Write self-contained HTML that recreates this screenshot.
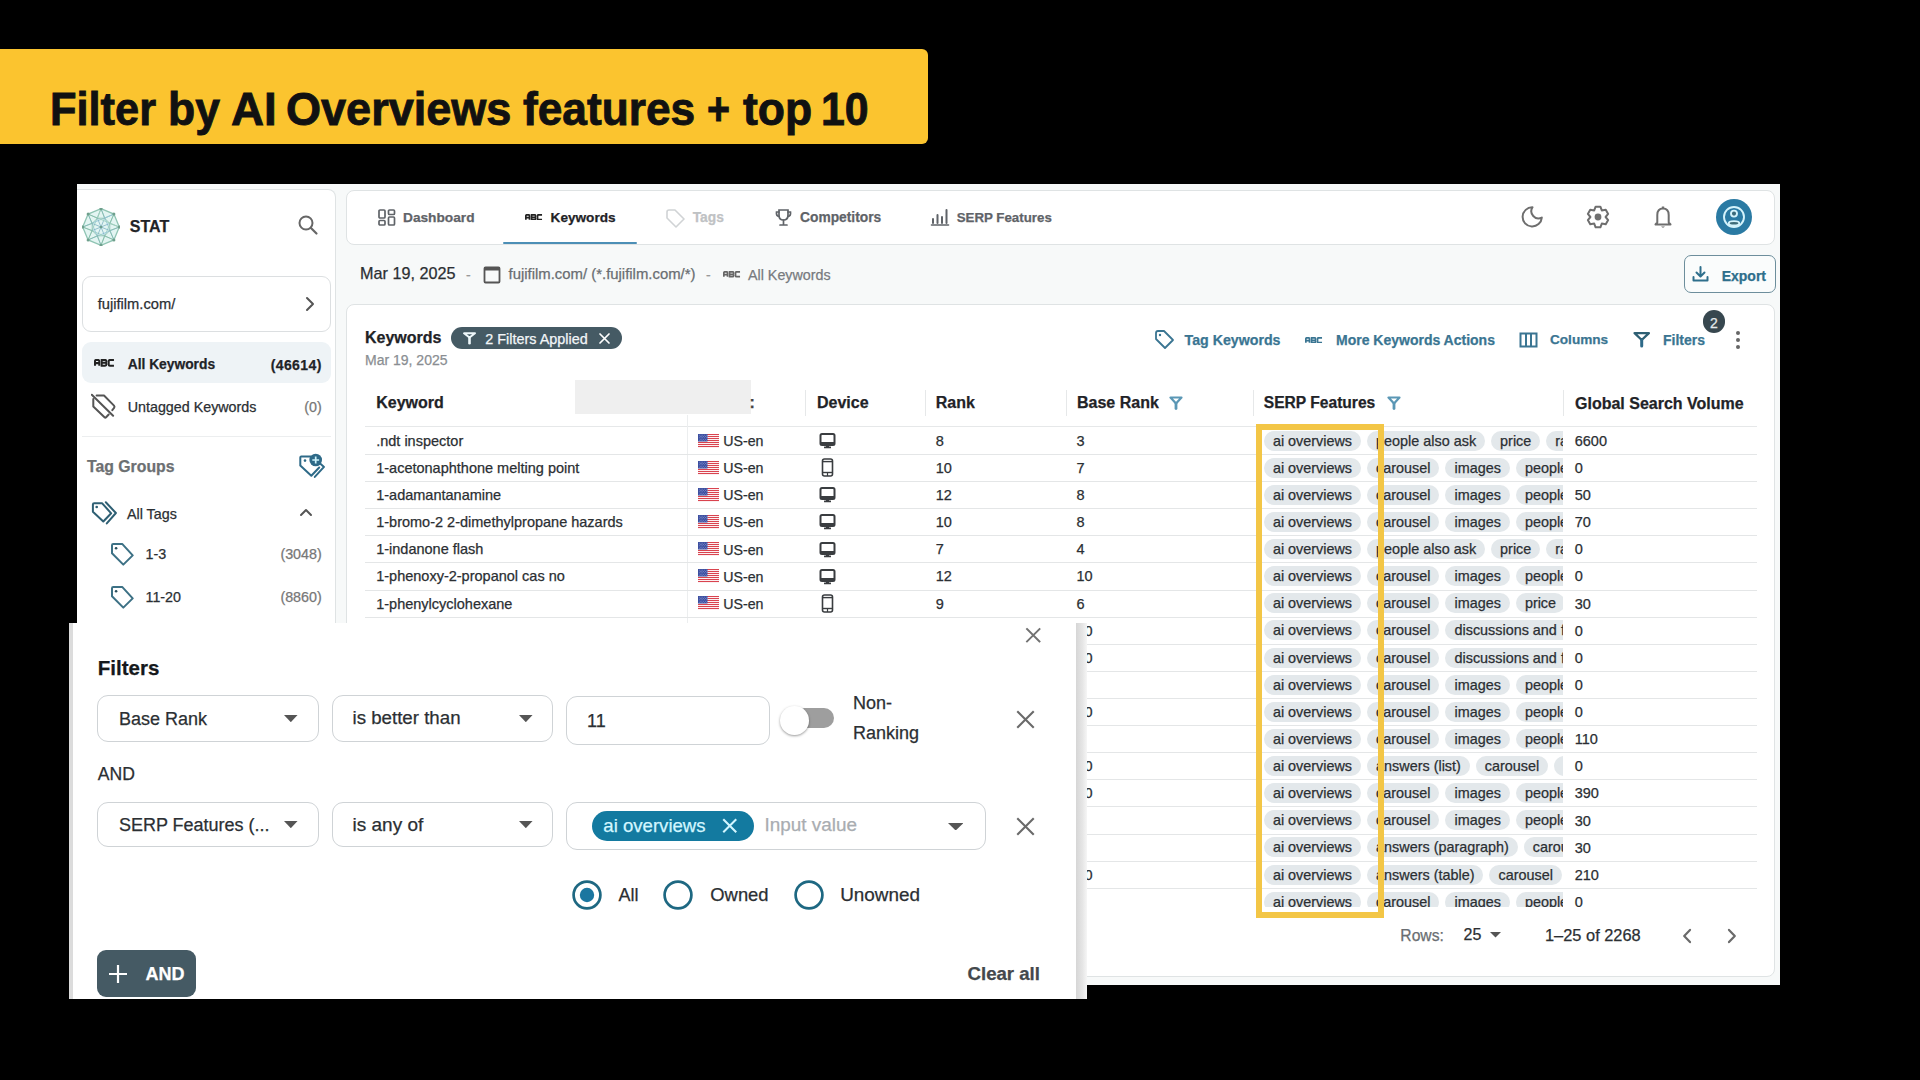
<!DOCTYPE html>
<html><head><meta charset="utf-8"><title>Filter by AI Overviews features</title>
<style>
html,body{margin:0;padding:0;}
body{width:1920px;height:1080px;background:#000;position:relative;overflow:hidden;font-family:"Liberation Sans", sans-serif;}
.t{position:absolute;white-space:nowrap;-webkit-text-stroke:0.25px currentColor;}
.r{position:absolute;}
.chips{position:absolute;width:299px;height:20px;overflow:hidden;display:flex;gap:6px;white-space:nowrap;}
.chip{-webkit-text-stroke:0.25px currentColor;flex:none;display:inline-block;height:20px;line-height:20px;padding:0 9px;border-radius:10px;background:#e3e8eb;color:#2b2f33;font-size:14.4px;}
</style></head><body>
<div class="r" style="left:0.00px;top:49.00px;width:928.00px;height:95.00px;background:#FBC42F;border-radius:0 6px 6px 0;"></div>
<div class="t" style="left:50.49px;top:84.81px;font-size:47px;line-height:47px;font-weight:700;color:#111;transform:scaleX(0.9227);transform-origin:0 0;-webkit-text-stroke:0.9px #111;">Filter</div>
<div class="t" style="left:167.82px;top:84.81px;font-size:47px;line-height:47px;font-weight:700;color:#111;transform:scaleX(0.9461);transform-origin:0 0;-webkit-text-stroke:0.9px #111;">by</div>
<div class="t" style="left:230.75px;top:84.81px;font-size:47px;line-height:47px;font-weight:700;color:#111;transform:scaleX(0.9725);transform-origin:0 0;-webkit-text-stroke:0.9px #111;">AI</div>
<div class="t" style="left:286.12px;top:84.81px;font-size:47px;line-height:47px;font-weight:700;color:#111;transform:scaleX(0.9585);transform-origin:0 0;-webkit-text-stroke:0.9px #111;">Overviews</div>
<div class="t" style="left:522.83px;top:84.81px;font-size:47px;line-height:47px;font-weight:700;color:#111;transform:scaleX(0.9411);transform-origin:0 0;-webkit-text-stroke:0.9px #111;">features</div>
<div class="t" style="left:706.96px;top:84.81px;font-size:47px;line-height:47px;font-weight:700;color:#111;transform:scaleX(0.8383);transform-origin:0 0;-webkit-text-stroke:0.9px #111;">+</div>
<div class="t" style="left:742.67px;top:84.81px;font-size:47px;line-height:47px;font-weight:700;color:#111;transform:scaleX(0.9461);transform-origin:0 0;-webkit-text-stroke:0.9px #111;">top</div>
<div class="t" style="left:820.82px;top:84.81px;font-size:47px;line-height:47px;font-weight:700;color:#111;transform:scaleX(0.9108);transform-origin:0 0;-webkit-text-stroke:0.9px #111;">10</div>
<div class="r" style="left:77.00px;top:184.00px;width:1703.00px;height:801.00px;background:#f7f9f9;"></div>
<div class="r" style="left:77.00px;top:189.00px;width:259.00px;height:796.00px;background:#fff;border:1px solid #dfe3e4;border-left:none;border-radius:0 8px 8px 0;box-sizing:border-box;"></div>
<svg class="r" style="left:82.00px;top:207.50px" width="38" height="38" viewBox="0 0 38 38"><polygon points="19.0,0.7 31.9,6.1 37.3,19.0 31.9,31.9 19.0,37.3 6.1,31.9 0.7,19.0 6.1,6.1" fill="#e3f5f2" stroke="#8fc4b3" stroke-width="1.3"/><line x1="19.0" y1="0.7" x2="31.9" y2="31.9" stroke="#95c6dc" stroke-width="0.9"/><line x1="19.0" y1="0.7" x2="22.6" y2="10.2" stroke="#86bba8" stroke-width="0.9"/><line x1="19.0" y1="0.7" x2="15.4" y2="10.2" stroke="#86bba8" stroke-width="0.9"/><line x1="22.6" y1="10.2" x2="19.0" y2="19.0" stroke="#7fb2c4" stroke-width="0.8"/><line x1="22.6" y1="10.2" x2="27.8" y2="15.4" stroke="#8cc0b0" stroke-width="0.8"/><line x1="31.9" y1="6.1" x2="19.0" y2="37.3" stroke="#9fd0c0" stroke-width="0.9"/><line x1="31.9" y1="6.1" x2="27.8" y2="15.4" stroke="#86bba8" stroke-width="0.9"/><line x1="31.9" y1="6.1" x2="22.6" y2="10.2" stroke="#86bba8" stroke-width="0.9"/><line x1="27.8" y1="15.4" x2="19.0" y2="19.0" stroke="#7fb2c4" stroke-width="0.8"/><line x1="27.8" y1="15.4" x2="27.8" y2="22.6" stroke="#8cc0b0" stroke-width="0.8"/><line x1="37.3" y1="19.0" x2="6.1" y2="31.9" stroke="#95c6dc" stroke-width="0.9"/><line x1="37.3" y1="19.0" x2="27.8" y2="22.6" stroke="#86bba8" stroke-width="0.9"/><line x1="37.3" y1="19.0" x2="27.8" y2="15.4" stroke="#86bba8" stroke-width="0.9"/><line x1="27.8" y1="22.6" x2="19.0" y2="19.0" stroke="#7fb2c4" stroke-width="0.8"/><line x1="27.8" y1="22.6" x2="22.6" y2="27.8" stroke="#8cc0b0" stroke-width="0.8"/><line x1="31.9" y1="31.9" x2="0.7" y2="19.0" stroke="#9fd0c0" stroke-width="0.9"/><line x1="31.9" y1="31.9" x2="22.6" y2="27.8" stroke="#86bba8" stroke-width="0.9"/><line x1="31.9" y1="31.9" x2="27.8" y2="22.6" stroke="#86bba8" stroke-width="0.9"/><line x1="22.6" y1="27.8" x2="19.0" y2="19.0" stroke="#7fb2c4" stroke-width="0.8"/><line x1="22.6" y1="27.8" x2="15.4" y2="27.8" stroke="#8cc0b0" stroke-width="0.8"/><line x1="19.0" y1="37.3" x2="6.1" y2="6.1" stroke="#95c6dc" stroke-width="0.9"/><line x1="19.0" y1="37.3" x2="15.4" y2="27.8" stroke="#86bba8" stroke-width="0.9"/><line x1="19.0" y1="37.3" x2="22.6" y2="27.8" stroke="#86bba8" stroke-width="0.9"/><line x1="15.4" y1="27.8" x2="19.0" y2="19.0" stroke="#7fb2c4" stroke-width="0.8"/><line x1="15.4" y1="27.8" x2="10.2" y2="22.6" stroke="#8cc0b0" stroke-width="0.8"/><line x1="6.1" y1="31.9" x2="19.0" y2="0.7" stroke="#9fd0c0" stroke-width="0.9"/><line x1="6.1" y1="31.9" x2="10.2" y2="22.6" stroke="#86bba8" stroke-width="0.9"/><line x1="6.1" y1="31.9" x2="15.4" y2="27.8" stroke="#86bba8" stroke-width="0.9"/><line x1="10.2" y1="22.6" x2="19.0" y2="19.0" stroke="#7fb2c4" stroke-width="0.8"/><line x1="10.2" y1="22.6" x2="10.2" y2="15.4" stroke="#8cc0b0" stroke-width="0.8"/><line x1="0.7" y1="19.0" x2="31.9" y2="6.1" stroke="#95c6dc" stroke-width="0.9"/><line x1="0.7" y1="19.0" x2="10.2" y2="15.4" stroke="#86bba8" stroke-width="0.9"/><line x1="0.7" y1="19.0" x2="10.2" y2="22.6" stroke="#86bba8" stroke-width="0.9"/><line x1="10.2" y1="15.4" x2="19.0" y2="19.0" stroke="#7fb2c4" stroke-width="0.8"/><line x1="10.2" y1="15.4" x2="15.4" y2="10.2" stroke="#8cc0b0" stroke-width="0.8"/><line x1="6.1" y1="6.1" x2="37.3" y2="19.0" stroke="#9fd0c0" stroke-width="0.9"/><line x1="6.1" y1="6.1" x2="15.4" y2="10.2" stroke="#86bba8" stroke-width="0.9"/><line x1="6.1" y1="6.1" x2="10.2" y2="15.4" stroke="#86bba8" stroke-width="0.9"/><line x1="15.4" y1="10.2" x2="19.0" y2="19.0" stroke="#7fb2c4" stroke-width="0.8"/><line x1="15.4" y1="10.2" x2="22.6" y2="10.2" stroke="#8cc0b0" stroke-width="0.8"/><circle cx="19.0" cy="0.7" r="1.5" fill="#6f9f8c"/><circle cx="31.9" cy="6.1" r="1.5" fill="#6f9f8c"/><circle cx="37.3" cy="19.0" r="1.5" fill="#6f9f8c"/><circle cx="31.9" cy="31.9" r="1.5" fill="#6f9f8c"/><circle cx="19.0" cy="37.3" r="1.5" fill="#6f9f8c"/><circle cx="6.1" cy="31.9" r="1.5" fill="#6f9f8c"/><circle cx="0.7" cy="19.0" r="1.5" fill="#6f9f8c"/><circle cx="6.1" cy="6.1" r="1.5" fill="#6f9f8c"/><circle cx="19.0" cy="19.0" r="1.3" fill="#6f9f8c"/></svg>
<div class="t" style="left:129.80px;top:219.06px;font-size:16px;line-height:16px;font-weight:700;color:#1f2327;">STAT</div>
<svg class="r" style="left:297.00px;top:214.00px" width="22" height="22" viewBox="0 0 22 22"><circle cx="9" cy="9" r="6.5" fill="none" stroke="#666" stroke-width="2"/><line x1="14" y1="14" x2="19.5" y2="19.5" stroke="#666" stroke-width="2.2" stroke-linecap="round"/></svg>
<div class="r" style="left:81.80px;top:275.80px;width:248.80px;height:56.20px;border:1px solid #dcdfe1;border-radius:9px;box-sizing:border-box;background:#fff;"></div>
<div class="t" style="left:97.70px;top:296.76px;font-size:14.7px;line-height:14.7px;font-weight:400;color:#2b2f33;">fujifilm.com/</div>
<svg class="r" style="left:303.00px;top:296.00px" width="14" height="16" viewBox="0 0 14 16"><polyline points="4,2 10,8 4,14" fill="none" stroke="#555" stroke-width="2" stroke-linecap="round" stroke-linejoin="round"/></svg>
<div class="r" style="left:81.70px;top:342.00px;width:249.80px;height:41.00px;background:#eef3f6;border-radius:9px;"></div>
<svg class="r" style="left:93.50px;top:359.00px" width="21.12" height="7.68" viewBox="0 0 22 8"><g fill="none" stroke="#222" stroke-width="2.1" stroke-linejoin="miter"><path d="M1 7 V2.3 Q1 1 2.3 1 H4.2 Q5.5 1 5.5 2.3 V7 M1 4.3 H5.5"/><path d="M8 1 H11.6 Q12.9 1 12.9 2.2 V3.2 Q12.9 4 12 4 Q12.9 4 12.9 4.9 V5.8 Q12.9 7 11.6 7 H8 Z M8 4 H12"/><path d="M20.8 1 H16.6 Q15.3 1 15.3 2.3 V5.7 Q15.3 7 16.6 7 H20.8"/></g></svg>
<div class="t" style="left:127.70px;top:357.72px;font-size:13.8px;line-height:13.8px;font-weight:700;color:#1f2327;">All Keywords</div>
<div class="t" style="right:1598.30px;top:357.55px;font-size:14px;line-height:14px;font-weight:700;color:#1f2327;letter-spacing:0.4px;">(46614)</div>
<svg class="r" style="left:91.00px;top:393.00px" width="26" height="27" viewBox="0 0 26 27"><g fill="none" stroke="#555" stroke-width="2" stroke-linejoin="round" stroke-linecap="round"><path d="M5.6 2.5 H13 L23 12.6 Q24 13.8 23 15 L21.3 17.2"/><path d="M2.3 5.9 V13.6 L13.5 24.2 Q14.3 25 15.1 24.2 L17.7 21.5"/><path d="M0.8 1.8 L22.1 22.8"/></g></svg>
<div class="t" style="left:127.70px;top:399.60px;font-size:14.3px;line-height:14.3px;font-weight:400;color:#2b2f33;">Untagged Keywords</div>
<div class="t" style="right:1598.30px;top:399.60px;font-size:14.3px;line-height:14.3px;font-weight:400;color:#777;">(0)</div>
<div class="r" style="left:82.00px;top:436.00px;width:249.00px;height:1.00px;background:#eceeef;"></div>
<div class="t" style="left:87.00px;top:458.53px;font-size:15.8px;line-height:15.8px;font-weight:700;color:#6c6f72;">Tag Groups</div>
<svg class="r" style="left:298.00px;top:451.00px" width="28" height="28" viewBox="0 0 28 28"><g fill="none" stroke="#2e6a88" stroke-width="2" stroke-linejoin="round" stroke-linecap="round"><path d="M12.4 5.5 H3.3 Q2.3 5.5 2.3 6.5 V14.6 L13.3 24.7 L21.2 16.5"/><path d="M22.7 13 L26 15.9 L16.8 25.9"/></g><circle cx="7" cy="9.6" r="1.3" fill="#2e6a88"/><circle cx="17.7" cy="9" r="6.3" fill="#2e6a88"/><path d="M17.7 5.6 V12.4 M14.3 9 H21.1" stroke="#cdf3fb" stroke-width="1.7"/></svg>
<svg class="r" style="left:90.00px;top:500.00px" width="28" height="26" viewBox="0 0 28 26"><g fill="none" stroke="#2e5f73" stroke-width="2" stroke-linejoin="round" stroke-linecap="round"><path d="M4.2 3.2 H12 L21.2 13.3 L13.3 21.5 L2.9 11.7 V4.5 Q2.9 3.2 4.2 3.2 Z"/><path d="M15.8 2.3 L25.9 13 L16.8 23.4"/></g><circle cx="6.7" cy="7" r="1.3" fill="#2e5f73"/></svg>
<div class="t" style="left:127.00px;top:506.80px;font-size:14.3px;line-height:14.3px;font-weight:400;color:#2b2f33;">All Tags</div>
<svg class="r" style="left:299.00px;top:507.00px" width="14" height="10" viewBox="0 0 14 10"><polyline points="2,8 7,3 12,8" fill="none" stroke="#555" stroke-width="2" stroke-linecap="round" stroke-linejoin="round"/></svg>
<svg class="r" style="left:110.00px;top:541.50px" width="24" height="24" viewBox="0 0 24 24"><g fill="none" stroke="#3d7185" stroke-width="2" stroke-linejoin="round"><path d="M3.2 2.1 H12.4 L22.7 13.4 L13.3 22.6 L2 11.3 V3.3 Q2 2.1 3.2 2.1 Z"/></g><circle cx="6.1" cy="6.3" r="1.3" fill="#2a4f5c"/></svg>
<div class="t" style="left:145.50px;top:546.50px;font-size:14.3px;line-height:14.3px;font-weight:400;color:#2b2f33;">1-3</div>
<div class="t" style="right:1598.30px;top:546.50px;font-size:14.3px;line-height:14.3px;font-weight:400;color:#777;">(3048)</div>
<svg class="r" style="left:110.00px;top:584.50px" width="24" height="24" viewBox="0 0 24 24"><g fill="none" stroke="#3d7185" stroke-width="2" stroke-linejoin="round"><path d="M3.2 2.1 H12.4 L22.7 13.4 L13.3 22.6 L2 11.3 V3.3 Q2 2.1 3.2 2.1 Z"/></g><circle cx="6.1" cy="6.3" r="1.3" fill="#2a4f5c"/></svg>
<div class="t" style="left:145.50px;top:589.50px;font-size:14.3px;line-height:14.3px;font-weight:400;color:#2b2f33;">11-20</div>
<div class="t" style="right:1598.30px;top:589.50px;font-size:14.3px;line-height:14.3px;font-weight:400;color:#777;">(8860)</div>
<div class="r" style="left:346.00px;top:189.50px;width:1429.00px;height:55.00px;background:#fff;border:1px solid #dfe3e4;border-radius:8px;box-sizing:border-box;"></div>
<svg class="r" style="left:378.00px;top:208.50px" width="18" height="17" viewBox="0 0 18 17"><g fill="none" stroke="#5f6368" stroke-width="1.7"><rect x="1" y="1" width="6" height="8" rx="1"/><rect x="10.5" y="1" width="6" height="4.5" rx="1"/><rect x="1" y="11.5" width="6" height="4.5" rx="1"/><rect x="10.5" y="8" width="6" height="8" rx="1"/></g></svg>
<div class="t" style="left:403.00px;top:210.90px;font-size:13.7px;line-height:13.7px;font-weight:700;color:#5f6368;">Dashboard</div>
<svg class="r" style="left:524.50px;top:213.50px" width="18.04" height="6.56" viewBox="0 0 22 8"><g fill="none" stroke="#222" stroke-width="2.1" stroke-linejoin="miter"><path d="M1 7 V2.3 Q1 1 2.3 1 H4.2 Q5.5 1 5.5 2.3 V7 M1 4.3 H5.5"/><path d="M8 1 H11.6 Q12.9 1 12.9 2.2 V3.2 Q12.9 4 12 4 Q12.9 4 12.9 4.9 V5.8 Q12.9 7 11.6 7 H8 Z M8 4 H12"/><path d="M20.8 1 H16.6 Q15.3 1 15.3 2.3 V5.7 Q15.3 7 16.6 7 H20.8"/></g></svg>
<div class="t" style="left:550.60px;top:210.99px;font-size:13.6px;line-height:13.6px;font-weight:700;color:#1f2327;">Keywords</div>
<div class="r" style="left:502.70px;top:241.50px;width:133.90px;height:2.50px;background:#4c8fb6;border-radius:1px;"></div>
<svg class="r" style="left:665.00px;top:208.00px" width="20" height="20" viewBox="0 0 20 20"><g fill="none" stroke="#d0d3d5" stroke-width="1.6" stroke-linejoin="round"><path d="M2 4 Q2 2 4 2 L10 2 L19 11 L11 19 L2 10 Z"/></g></svg>
<div class="t" style="left:692.70px;top:210.82px;font-size:13.8px;line-height:13.8px;font-weight:700;color:#bfc2c4;">Tags</div>
<svg class="r" style="left:774.00px;top:208.00px" width="19" height="19" viewBox="0 0 19 19"><g fill="none" stroke="#5f6368" stroke-width="1.7" stroke-linecap="round"><path d="M5 2 H14 V7 Q14 12 9.5 12 Q5 12 5 7 Z"/><path d="M5 4 H2.5 Q2 8 5 8.5 M14 4 H16.5 Q17 8 14 8.5"/><path d="M9.5 12 V16 M6 17 H13"/></g></svg>
<div class="t" style="left:800.00px;top:210.82px;font-size:13.8px;line-height:13.8px;font-weight:700;color:#5f6368;">Competitors</div>
<svg class="r" style="left:930.00px;top:208.00px" width="20" height="18" viewBox="0 0 20 18"><g stroke="#5f6368" stroke-width="2" stroke-linecap="round"><line x1="3" y1="15" x2="3" y2="11"/><line x1="7.5" y1="15" x2="7.5" y2="7"/><line x1="12" y1="15" x2="12" y2="9"/><line x1="16.5" y1="15" x2="16.5" y2="2"/><line x1="1.5" y1="17" x2="18.5" y2="17" stroke-width="1.6"/></g></svg>
<div class="t" style="left:956.70px;top:211.24px;font-size:13.3px;line-height:13.3px;font-weight:700;color:#5f6368;">SERP Features</div>
<svg class="r" style="left:1520.00px;top:205.00px" width="24" height="24" viewBox="0 0 24 24"><path d="M12.5 2.3 A9.6 9.6 0 1 0 21.8 12.6 A7.2 7.2 0 0 1 12.5 2.3 Z" fill="none" stroke="#6e6e6e" stroke-width="2" stroke-linejoin="round"/></svg>
<svg class="r" style="left:1586.00px;top:205.00px" width="24" height="24" viewBox="0 0 24 24"><path fill="none" stroke="#6e6e6e" stroke-width="2" stroke-linejoin="round" d="M8.20 5.42 L9.62 1.67 L14.38 1.67 L15.80 5.42 L15.80 5.42 L19.75 4.77 L22.14 8.90 L19.60 12.00 L19.60 12.00 L22.14 15.10 L19.75 19.23 L15.80 18.58 L15.80 18.58 L14.38 22.33 L9.62 22.33 L8.20 18.58 L8.20 18.58 L4.25 19.23 L1.86 15.10 L4.40 12.00 L4.40 12.00 L1.86 8.90 L4.25 4.77 L8.20 5.42 Z"/><circle cx="12" cy="12" r="3.4" fill="#707070"/></svg>
<svg class="r" style="left:1653.00px;top:205.00px" width="20" height="24" viewBox="0 0 20 24"><g fill="none" stroke="#6e6e6e" stroke-width="2" stroke-linejoin="round"><path d="M10 3.5 Q4.3 3.5 4.3 10 V17.5 L2.5 19.5 H17.5 L15.7 17.5 V10 Q15.7 3.5 10 3.5 Z"/></g><path d="M8.8 1.5 H11.2 V3.5 H8.8 Z" fill="#6e6e6e"/><path d="M8 21.5 H12 Q10 23.8 8 21.5 Z" fill="#6e6e6e"/></svg>
<div class="r" style="left:1715.5px;top:199px;width:36px;height:36px;border-radius:50%;background:#2a7aa3;"></div>
<svg class="r" style="left:1721.50px;top:205.00px" width="24" height="24" viewBox="0 0 24 24"><circle cx="12" cy="12" r="10" fill="none" stroke="#d4f3fb" stroke-width="1.9"/><circle cx="12" cy="8.6" r="3" fill="#3b6a7a" stroke="#d4f3fb" stroke-width="1.9"/><ellipse cx="12" cy="18.3" rx="5.3" ry="2.2" fill="#3d6b78" stroke="#d4f3fb" stroke-width="1.9"/></svg>
<div class="t" style="left:360.00px;top:265.09px;font-size:16.2px;line-height:16.2px;font-weight:400;color:#2b2f33;">Mar 19, 2025</div>
<div class="t" style="left:466.00px;top:267.95px;font-size:14px;line-height:14px;font-weight:400;color:#999;">-</div>
<svg class="r" style="left:482.50px;top:265.50px" width="19" height="18" viewBox="0 0 19 18"><rect x="1.5" y="1.5" width="15" height="15" rx="1" fill="none" stroke="#555" stroke-width="1.8"/><rect x="1.5" y="1.5" width="15" height="3" fill="#555"/></svg>
<div class="t" style="left:508.50px;top:267.19px;font-size:14.9px;line-height:14.9px;font-weight:400;color:#6a6e72;">fujifilm.com/ (*.fujifilm.com/*)</div>
<div class="t" style="left:706.00px;top:267.95px;font-size:14px;line-height:14px;font-weight:400;color:#999;">-</div>
<svg class="r" style="left:723.00px;top:271.00px" width="18.04" height="6.56" viewBox="0 0 22 8"><g fill="none" stroke="#666" stroke-width="2.1" stroke-linejoin="miter"><path d="M1 7 V2.3 Q1 1 2.3 1 H4.2 Q5.5 1 5.5 2.3 V7 M1 4.3 H5.5"/><path d="M8 1 H11.6 Q12.9 1 12.9 2.2 V3.2 Q12.9 4 12 4 Q12.9 4 12.9 4.9 V5.8 Q12.9 7 11.6 7 H8 Z M8 4 H12"/><path d="M20.8 1 H16.6 Q15.3 1 15.3 2.3 V5.7 Q15.3 7 16.6 7 H20.8"/></g></svg>
<div class="t" style="left:748.00px;top:267.70px;font-size:14.3px;line-height:14.3px;font-weight:400;color:#777b7f;">All Keywords</div>
<div class="r" style="left:1684.00px;top:255.30px;width:91.60px;height:37.50px;border:1.3px solid #6d8e9c;border-radius:7px;box-sizing:border-box;background:#fafcfc;"></div>
<svg class="r" style="left:1692.00px;top:265.00px" width="17" height="18" viewBox="0 0 17 18"><g fill="none" stroke="#2e6f8c" stroke-width="2" stroke-linecap="round" stroke-linejoin="round"><path d="M8.5 2 V11 M4.5 7.5 L8.5 11.5 L12.5 7.5"/><path d="M1.5 12 V15.5 H15.5 V12"/></g></svg>
<div class="t" style="left:1721.70px;top:268.65px;font-size:14px;line-height:14px;font-weight:700;color:#2e6f8c;">Export</div>
<div class="r" style="left:346.00px;top:303.50px;width:1429.00px;height:673.50px;background:#fff;border:1px solid #dfe3e4;border-radius:8px;box-sizing:border-box;"></div>
<div class="t" style="left:365.00px;top:329.86px;font-size:16px;line-height:16px;font-weight:700;color:#1f2327;">Keywords</div>
<div class="r" style="left:451.00px;top:327.25px;width:171.20px;height:22.15px;background:#455a64;border-radius:11px;"></div>
<svg class="r" style="left:461.00px;top:330.00px" width="16" height="16" viewBox="0 0 16 16"><g fill="none" stroke="#eef7fa" stroke-width="2" stroke-linejoin="round" stroke-linecap="round"><path d="M3 3.3 H14 L8.5 7.5 Z"/><path d="M8.5 7.5 V13.3" stroke-width="2.6"/></g></svg>
<div class="t" style="left:485.30px;top:332.11px;font-size:14.4px;line-height:14.4px;font-weight:400;color:#f2f6f8;">2 Filters Applied</div>
<svg class="r" style="left:598.00px;top:332.00px" width="13" height="13" viewBox="0 0 13 13"><path d="M2 2 L11 11 M11 2 L2 11" stroke="#fff" stroke-width="1.7" stroke-linecap="round"/></svg>
<div class="t" style="left:365.00px;top:352.90px;font-size:14px;line-height:14px;font-weight:400;color:#8a8e92;">Mar 19, 2025</div>
<svg class="r" style="left:1154.00px;top:329.00px" width="21" height="21" viewBox="0 0 21 21"><g fill="none" stroke="#3a7592" stroke-width="1.8" stroke-linejoin="round"><path d="M2 4 Q2 2 4 2 L10 2 L19 11 L11 19 L2 10 Z"/></g><circle cx="6" cy="6" r="1.2" fill="#3a7592"/></svg>
<div class="t" style="left:1184.60px;top:332.98px;font-size:14.2px;line-height:14.2px;font-weight:700;color:#3a7592;">Tag Keywords</div>
<svg class="r" style="left:1305.00px;top:336.50px" width="18.04" height="6.56" viewBox="0 0 22 8"><g fill="none" stroke="#3a7592" stroke-width="2.1" stroke-linejoin="miter"><path d="M1 7 V2.3 Q1 1 2.3 1 H4.2 Q5.5 1 5.5 2.3 V7 M1 4.3 H5.5"/><path d="M8 1 H11.6 Q12.9 1 12.9 2.2 V3.2 Q12.9 4 12 4 Q12.9 4 12.9 4.9 V5.8 Q12.9 7 11.6 7 H8 Z M8 4 H12"/><path d="M20.8 1 H16.6 Q15.3 1 15.3 2.3 V5.7 Q15.3 7 16.6 7 H20.8"/></g></svg>
<div class="t" style="left:1336.00px;top:333.15px;font-size:14px;line-height:14px;font-weight:700;color:#3a7592;">More Keywords Actions</div>
<svg class="r" style="left:1519.00px;top:332.00px" width="19" height="16" viewBox="0 0 19 16"><g fill="none" stroke="#3a7592" stroke-width="2"><rect x="1.5" y="1.5" width="16" height="13"/><line x1="7" y1="1.5" x2="7" y2="14.5"/><line x1="12" y1="1.5" x2="12" y2="14.5"/></g></svg>
<div class="t" style="left:1550.00px;top:333.49px;font-size:13.6px;line-height:13.6px;font-weight:700;color:#3a7592;">Columns</div>
<svg class="r" style="left:1633.00px;top:331.00px" width="17" height="17" viewBox="0 0 17 17"><g fill="none" stroke="#2e5f73" stroke-width="2.3" stroke-linejoin="round" stroke-linecap="round"><path d="M1.6 2.1 H15.9 L8.7 9 Z"/><path d="M8.7 9 V15" stroke="#2e6a88" stroke-width="3"/></g></svg>
<div class="t" style="left:1663.00px;top:333.15px;font-size:14px;line-height:14px;font-weight:700;color:#3a7592;">Filters</div>
<div class="r" style="left:1702.6px;top:310.2px;width:22.8px;height:22.8px;border-radius:50%;background:#37474f;"></div>
<div class="t" style="left:1714.00px;top:315.75px;font-size:14px;line-height:14px;font-weight:400;color:#e3e9eb;width:0;text-align:center;display:flex;justify-content:center;">2</div>
<div class="r" style="left:1735.8px;top:330.6px;width:4.4px;height:4.4px;border-radius:50%;background:#666;"></div>
<div class="r" style="left:1735.8px;top:337.5px;width:4.4px;height:4.4px;border-radius:50%;background:#666;"></div>
<div class="r" style="left:1735.8px;top:344.5px;width:4.4px;height:4.4px;border-radius:50%;background:#666;"></div>
<div class="t" style="left:376.20px;top:394.86px;font-size:16px;line-height:16px;font-weight:700;color:#1f2327;">Keyword</div>
<div class="r" style="left:575.30px;top:380.30px;width:175.45px;height:34.20px;background:#efefef;"></div>
<div class="t" style="left:749.50px;top:394.86px;font-size:16px;line-height:16px;font-weight:700;color:#444;">:</div>
<div class="r" style="left:805.00px;top:390.00px;width:1.00px;height:25.50px;background:#e6e8e9;"></div>
<div class="r" style="left:924.50px;top:390.00px;width:1.00px;height:25.50px;background:#e6e8e9;"></div>
<div class="r" style="left:1066.00px;top:390.00px;width:1.00px;height:25.50px;background:#e6e8e9;"></div>
<div class="r" style="left:1252.50px;top:390.00px;width:1.00px;height:25.50px;background:#e6e8e9;"></div>
<div class="r" style="left:1563.00px;top:390.00px;width:1.00px;height:25.50px;background:#e6e8e9;"></div>
<div class="t" style="left:817.00px;top:394.86px;font-size:16px;line-height:16px;font-weight:700;color:#1f2327;">Device</div>
<div class="t" style="left:935.75px;top:394.86px;font-size:16px;line-height:16px;font-weight:700;color:#1f2327;">Rank</div>
<div class="t" style="left:1077.00px;top:394.86px;font-size:16px;line-height:16px;font-weight:700;color:#1f2327;">Base Rank</div>
<svg class="r" style="left:1169.00px;top:394.50px" width="14" height="15" viewBox="0 0 14 15"><g fill="none" stroke="#5b97b5" stroke-width="2.2" stroke-linejoin="round" stroke-linecap="round"><path d="M1.5 2.5 H12.5 L7 8.5 Z"/><path d="M7 8.5 V13.5" stroke-width="2.8"/></g></svg>
<div class="t" style="left:1263.75px;top:395.19px;font-size:15.6px;line-height:15.6px;font-weight:700;color:#1f2327;">SERP Features</div>
<svg class="r" style="left:1387.00px;top:394.50px" width="14" height="15" viewBox="0 0 14 15"><g fill="none" stroke="#5b97b5" stroke-width="2.2" stroke-linejoin="round" stroke-linecap="round"><path d="M1.5 2.5 H12.5 L7 8.5 Z"/><path d="M7 8.5 V13.5" stroke-width="2.8"/></g></svg>
<div class="t" style="left:1575.00px;top:395.66px;font-size:16px;line-height:16px;font-weight:700;color:#1f2327;">Global Search Volume</div>
<div class="r" style="left:365.00px;top:426.00px;width:1392.00px;height:1.00px;background:#e6e8e9;"></div>
<div class="r" style="left:687.00px;top:414.50px;width:1.00px;height:491.50px;background:#eceeef;"></div>
<div class="r" style="left:346px;top:427px;width:1420px;height:479.5px;overflow:hidden;">
<div class="r" style="left:19.00px;top:26.90px;width:1392.00px;height:1.00px;background:#e4e6e7;"></div>
<div class="t" style="left:30.20px;top:6.83px;font-size:14.5px;line-height:14.5px;font-weight:400;color:#2b2f33;">.ndt inspector</div>
<svg class="r" style="left:352.30px;top:6.60px" width="21" height="14" viewBox="0 0 21 14"><rect width="21" height="14" fill="#fff"/><rect y="0.00" width="21" height="1.08" fill="#d9434f"/><rect y="2.00" width="21" height="1.08" fill="#d9434f"/><rect y="4.00" width="21" height="1.08" fill="#d9434f"/><rect y="6.00" width="21" height="1.08" fill="#d9434f"/><rect y="8.00" width="21" height="1.08" fill="#d9434f"/><rect y="10.00" width="21" height="1.08" fill="#d9434f"/><rect y="12.00" width="21" height="1.08" fill="#d9434f"/><rect width="9.5" height="7.5" fill="#3c4fa0"/><circle cx="1.30" cy="1.10" r="0.35" fill="#cfd6ff"/><circle cx="3.05" cy="1.10" r="0.35" fill="#cfd6ff"/><circle cx="4.80" cy="1.10" r="0.35" fill="#cfd6ff"/><circle cx="6.55" cy="1.10" r="0.35" fill="#cfd6ff"/><circle cx="8.30" cy="1.10" r="0.35" fill="#cfd6ff"/><circle cx="2.15" cy="2.45" r="0.35" fill="#cfd6ff"/><circle cx="3.90" cy="2.45" r="0.35" fill="#cfd6ff"/><circle cx="5.65" cy="2.45" r="0.35" fill="#cfd6ff"/><circle cx="7.40" cy="2.45" r="0.35" fill="#cfd6ff"/><circle cx="9.15" cy="2.45" r="0.35" fill="#cfd6ff"/><circle cx="1.30" cy="3.80" r="0.35" fill="#cfd6ff"/><circle cx="3.05" cy="3.80" r="0.35" fill="#cfd6ff"/><circle cx="4.80" cy="3.80" r="0.35" fill="#cfd6ff"/><circle cx="6.55" cy="3.80" r="0.35" fill="#cfd6ff"/><circle cx="8.30" cy="3.80" r="0.35" fill="#cfd6ff"/><circle cx="2.15" cy="5.15" r="0.35" fill="#cfd6ff"/><circle cx="3.90" cy="5.15" r="0.35" fill="#cfd6ff"/><circle cx="5.65" cy="5.15" r="0.35" fill="#cfd6ff"/><circle cx="7.40" cy="5.15" r="0.35" fill="#cfd6ff"/><circle cx="9.15" cy="5.15" r="0.35" fill="#cfd6ff"/><circle cx="1.30" cy="6.50" r="0.35" fill="#cfd6ff"/><circle cx="3.05" cy="6.50" r="0.35" fill="#cfd6ff"/><circle cx="4.80" cy="6.50" r="0.35" fill="#cfd6ff"/><circle cx="6.55" cy="6.50" r="0.35" fill="#cfd6ff"/><circle cx="8.30" cy="6.50" r="0.35" fill="#cfd6ff"/></svg>
<div class="t" style="left:377.30px;top:7.08px;font-size:14.2px;line-height:14.2px;font-weight:400;color:#2b2f33;">US-en</div>
<svg class="r" style="left:472.50px;top:6.10px" width="17" height="16" viewBox="0 0 17 16"><path d="M1.5 2.5 Q1.5 1 3 1 H14 Q15.5 1 15.5 2.5 V10.5 Q15.5 12 14 12 H3 Q1.5 12 1.5 10.5 Z" fill="none" stroke="#3a3d40" stroke-width="2"/><rect x="1.5" y="9" width="14" height="3" fill="#3a3d40"/><rect x="7" y="12" width="3" height="2.2" fill="#3a3d40"/><rect x="5" y="13.6" width="7" height="1.6" rx="0.5" fill="#3a3d40"/></svg>
<div class="t" style="left:589.75px;top:6.83px;font-size:14.5px;line-height:14.5px;font-weight:400;color:#2b2f33;">8</div>
<div class="t" style="left:730.50px;top:6.83px;font-size:14.5px;line-height:14.5px;font-weight:400;color:#2b2f33;">3</div>
<div class="chips" style="left:917.90px;top:3.60px;"><span class="chip">ai overviews</span><span class="chip">people also ask</span><span class="chip">price</span><span class="chip">rank</span></div>
<div class="t" style="left:1228.70px;top:6.83px;font-size:14.5px;line-height:14.5px;font-weight:400;color:#2b2f33;">6600</div>
<div class="r" style="left:19.00px;top:54.02px;width:1392.00px;height:1.00px;background:#e4e6e7;"></div>
<div class="t" style="left:30.20px;top:33.95px;font-size:14.5px;line-height:14.5px;font-weight:400;color:#2b2f33;">1-acetonaphthone melting point</div>
<svg class="r" style="left:352.30px;top:33.72px" width="21" height="14" viewBox="0 0 21 14"><rect width="21" height="14" fill="#fff"/><rect y="0.00" width="21" height="1.08" fill="#d9434f"/><rect y="2.00" width="21" height="1.08" fill="#d9434f"/><rect y="4.00" width="21" height="1.08" fill="#d9434f"/><rect y="6.00" width="21" height="1.08" fill="#d9434f"/><rect y="8.00" width="21" height="1.08" fill="#d9434f"/><rect y="10.00" width="21" height="1.08" fill="#d9434f"/><rect y="12.00" width="21" height="1.08" fill="#d9434f"/><rect width="9.5" height="7.5" fill="#3c4fa0"/><circle cx="1.30" cy="1.10" r="0.35" fill="#cfd6ff"/><circle cx="3.05" cy="1.10" r="0.35" fill="#cfd6ff"/><circle cx="4.80" cy="1.10" r="0.35" fill="#cfd6ff"/><circle cx="6.55" cy="1.10" r="0.35" fill="#cfd6ff"/><circle cx="8.30" cy="1.10" r="0.35" fill="#cfd6ff"/><circle cx="2.15" cy="2.45" r="0.35" fill="#cfd6ff"/><circle cx="3.90" cy="2.45" r="0.35" fill="#cfd6ff"/><circle cx="5.65" cy="2.45" r="0.35" fill="#cfd6ff"/><circle cx="7.40" cy="2.45" r="0.35" fill="#cfd6ff"/><circle cx="9.15" cy="2.45" r="0.35" fill="#cfd6ff"/><circle cx="1.30" cy="3.80" r="0.35" fill="#cfd6ff"/><circle cx="3.05" cy="3.80" r="0.35" fill="#cfd6ff"/><circle cx="4.80" cy="3.80" r="0.35" fill="#cfd6ff"/><circle cx="6.55" cy="3.80" r="0.35" fill="#cfd6ff"/><circle cx="8.30" cy="3.80" r="0.35" fill="#cfd6ff"/><circle cx="2.15" cy="5.15" r="0.35" fill="#cfd6ff"/><circle cx="3.90" cy="5.15" r="0.35" fill="#cfd6ff"/><circle cx="5.65" cy="5.15" r="0.35" fill="#cfd6ff"/><circle cx="7.40" cy="5.15" r="0.35" fill="#cfd6ff"/><circle cx="9.15" cy="5.15" r="0.35" fill="#cfd6ff"/><circle cx="1.30" cy="6.50" r="0.35" fill="#cfd6ff"/><circle cx="3.05" cy="6.50" r="0.35" fill="#cfd6ff"/><circle cx="4.80" cy="6.50" r="0.35" fill="#cfd6ff"/><circle cx="6.55" cy="6.50" r="0.35" fill="#cfd6ff"/><circle cx="8.30" cy="6.50" r="0.35" fill="#cfd6ff"/></svg>
<div class="t" style="left:377.30px;top:34.20px;font-size:14.2px;line-height:14.2px;font-weight:400;color:#2b2f33;">US-en</div>
<svg class="r" style="left:474.50px;top:31.22px" width="13" height="19" viewBox="0 0 13 19"><rect x="1.5" y="1" width="10" height="17" rx="2" fill="none" stroke="#3a3d40" stroke-width="1.6"/><line x1="1.5" y1="3.6" x2="11.5" y2="3.6" stroke="#3a3d40" stroke-width="1.4"/><line x1="1.5" y1="14.5" x2="11.5" y2="14.5" stroke="#3a3d40" stroke-width="1.4"/><line x1="6.5" y1="14.5" x2="6.5" y2="18" stroke="#3a3d40" stroke-width="1.2"/></svg>
<div class="t" style="left:589.75px;top:33.95px;font-size:14.5px;line-height:14.5px;font-weight:400;color:#2b2f33;">10</div>
<div class="t" style="left:730.50px;top:33.95px;font-size:14.5px;line-height:14.5px;font-weight:400;color:#2b2f33;">7</div>
<div class="chips" style="left:917.90px;top:30.72px;"><span class="chip">ai overviews</span><span class="chip">carousel</span><span class="chip">images</span><span class="chip">people also ask</span></div>
<div class="t" style="left:1228.70px;top:33.95px;font-size:14.5px;line-height:14.5px;font-weight:400;color:#2b2f33;">0</div>
<div class="r" style="left:19.00px;top:81.14px;width:1392.00px;height:1.00px;background:#e4e6e7;"></div>
<div class="t" style="left:30.20px;top:61.07px;font-size:14.5px;line-height:14.5px;font-weight:400;color:#2b2f33;">1-adamantanamine</div>
<svg class="r" style="left:352.30px;top:60.84px" width="21" height="14" viewBox="0 0 21 14"><rect width="21" height="14" fill="#fff"/><rect y="0.00" width="21" height="1.08" fill="#d9434f"/><rect y="2.00" width="21" height="1.08" fill="#d9434f"/><rect y="4.00" width="21" height="1.08" fill="#d9434f"/><rect y="6.00" width="21" height="1.08" fill="#d9434f"/><rect y="8.00" width="21" height="1.08" fill="#d9434f"/><rect y="10.00" width="21" height="1.08" fill="#d9434f"/><rect y="12.00" width="21" height="1.08" fill="#d9434f"/><rect width="9.5" height="7.5" fill="#3c4fa0"/><circle cx="1.30" cy="1.10" r="0.35" fill="#cfd6ff"/><circle cx="3.05" cy="1.10" r="0.35" fill="#cfd6ff"/><circle cx="4.80" cy="1.10" r="0.35" fill="#cfd6ff"/><circle cx="6.55" cy="1.10" r="0.35" fill="#cfd6ff"/><circle cx="8.30" cy="1.10" r="0.35" fill="#cfd6ff"/><circle cx="2.15" cy="2.45" r="0.35" fill="#cfd6ff"/><circle cx="3.90" cy="2.45" r="0.35" fill="#cfd6ff"/><circle cx="5.65" cy="2.45" r="0.35" fill="#cfd6ff"/><circle cx="7.40" cy="2.45" r="0.35" fill="#cfd6ff"/><circle cx="9.15" cy="2.45" r="0.35" fill="#cfd6ff"/><circle cx="1.30" cy="3.80" r="0.35" fill="#cfd6ff"/><circle cx="3.05" cy="3.80" r="0.35" fill="#cfd6ff"/><circle cx="4.80" cy="3.80" r="0.35" fill="#cfd6ff"/><circle cx="6.55" cy="3.80" r="0.35" fill="#cfd6ff"/><circle cx="8.30" cy="3.80" r="0.35" fill="#cfd6ff"/><circle cx="2.15" cy="5.15" r="0.35" fill="#cfd6ff"/><circle cx="3.90" cy="5.15" r="0.35" fill="#cfd6ff"/><circle cx="5.65" cy="5.15" r="0.35" fill="#cfd6ff"/><circle cx="7.40" cy="5.15" r="0.35" fill="#cfd6ff"/><circle cx="9.15" cy="5.15" r="0.35" fill="#cfd6ff"/><circle cx="1.30" cy="6.50" r="0.35" fill="#cfd6ff"/><circle cx="3.05" cy="6.50" r="0.35" fill="#cfd6ff"/><circle cx="4.80" cy="6.50" r="0.35" fill="#cfd6ff"/><circle cx="6.55" cy="6.50" r="0.35" fill="#cfd6ff"/><circle cx="8.30" cy="6.50" r="0.35" fill="#cfd6ff"/></svg>
<div class="t" style="left:377.30px;top:61.32px;font-size:14.2px;line-height:14.2px;font-weight:400;color:#2b2f33;">US-en</div>
<svg class="r" style="left:472.50px;top:60.34px" width="17" height="16" viewBox="0 0 17 16"><path d="M1.5 2.5 Q1.5 1 3 1 H14 Q15.5 1 15.5 2.5 V10.5 Q15.5 12 14 12 H3 Q1.5 12 1.5 10.5 Z" fill="none" stroke="#3a3d40" stroke-width="2"/><rect x="1.5" y="9" width="14" height="3" fill="#3a3d40"/><rect x="7" y="12" width="3" height="2.2" fill="#3a3d40"/><rect x="5" y="13.6" width="7" height="1.6" rx="0.5" fill="#3a3d40"/></svg>
<div class="t" style="left:589.75px;top:61.07px;font-size:14.5px;line-height:14.5px;font-weight:400;color:#2b2f33;">12</div>
<div class="t" style="left:730.50px;top:61.07px;font-size:14.5px;line-height:14.5px;font-weight:400;color:#2b2f33;">8</div>
<div class="chips" style="left:917.90px;top:57.84px;"><span class="chip">ai overviews</span><span class="chip">carousel</span><span class="chip">images</span><span class="chip">people also ask</span></div>
<div class="t" style="left:1228.70px;top:61.07px;font-size:14.5px;line-height:14.5px;font-weight:400;color:#2b2f33;">50</div>
<div class="r" style="left:19.00px;top:108.26px;width:1392.00px;height:1.00px;background:#e4e6e7;"></div>
<div class="t" style="left:30.20px;top:88.19px;font-size:14.5px;line-height:14.5px;font-weight:400;color:#2b2f33;">1-bromo-2 2-dimethylpropane hazards</div>
<svg class="r" style="left:352.30px;top:87.96px" width="21" height="14" viewBox="0 0 21 14"><rect width="21" height="14" fill="#fff"/><rect y="0.00" width="21" height="1.08" fill="#d9434f"/><rect y="2.00" width="21" height="1.08" fill="#d9434f"/><rect y="4.00" width="21" height="1.08" fill="#d9434f"/><rect y="6.00" width="21" height="1.08" fill="#d9434f"/><rect y="8.00" width="21" height="1.08" fill="#d9434f"/><rect y="10.00" width="21" height="1.08" fill="#d9434f"/><rect y="12.00" width="21" height="1.08" fill="#d9434f"/><rect width="9.5" height="7.5" fill="#3c4fa0"/><circle cx="1.30" cy="1.10" r="0.35" fill="#cfd6ff"/><circle cx="3.05" cy="1.10" r="0.35" fill="#cfd6ff"/><circle cx="4.80" cy="1.10" r="0.35" fill="#cfd6ff"/><circle cx="6.55" cy="1.10" r="0.35" fill="#cfd6ff"/><circle cx="8.30" cy="1.10" r="0.35" fill="#cfd6ff"/><circle cx="2.15" cy="2.45" r="0.35" fill="#cfd6ff"/><circle cx="3.90" cy="2.45" r="0.35" fill="#cfd6ff"/><circle cx="5.65" cy="2.45" r="0.35" fill="#cfd6ff"/><circle cx="7.40" cy="2.45" r="0.35" fill="#cfd6ff"/><circle cx="9.15" cy="2.45" r="0.35" fill="#cfd6ff"/><circle cx="1.30" cy="3.80" r="0.35" fill="#cfd6ff"/><circle cx="3.05" cy="3.80" r="0.35" fill="#cfd6ff"/><circle cx="4.80" cy="3.80" r="0.35" fill="#cfd6ff"/><circle cx="6.55" cy="3.80" r="0.35" fill="#cfd6ff"/><circle cx="8.30" cy="3.80" r="0.35" fill="#cfd6ff"/><circle cx="2.15" cy="5.15" r="0.35" fill="#cfd6ff"/><circle cx="3.90" cy="5.15" r="0.35" fill="#cfd6ff"/><circle cx="5.65" cy="5.15" r="0.35" fill="#cfd6ff"/><circle cx="7.40" cy="5.15" r="0.35" fill="#cfd6ff"/><circle cx="9.15" cy="5.15" r="0.35" fill="#cfd6ff"/><circle cx="1.30" cy="6.50" r="0.35" fill="#cfd6ff"/><circle cx="3.05" cy="6.50" r="0.35" fill="#cfd6ff"/><circle cx="4.80" cy="6.50" r="0.35" fill="#cfd6ff"/><circle cx="6.55" cy="6.50" r="0.35" fill="#cfd6ff"/><circle cx="8.30" cy="6.50" r="0.35" fill="#cfd6ff"/></svg>
<div class="t" style="left:377.30px;top:88.44px;font-size:14.2px;line-height:14.2px;font-weight:400;color:#2b2f33;">US-en</div>
<svg class="r" style="left:472.50px;top:87.46px" width="17" height="16" viewBox="0 0 17 16"><path d="M1.5 2.5 Q1.5 1 3 1 H14 Q15.5 1 15.5 2.5 V10.5 Q15.5 12 14 12 H3 Q1.5 12 1.5 10.5 Z" fill="none" stroke="#3a3d40" stroke-width="2"/><rect x="1.5" y="9" width="14" height="3" fill="#3a3d40"/><rect x="7" y="12" width="3" height="2.2" fill="#3a3d40"/><rect x="5" y="13.6" width="7" height="1.6" rx="0.5" fill="#3a3d40"/></svg>
<div class="t" style="left:589.75px;top:88.19px;font-size:14.5px;line-height:14.5px;font-weight:400;color:#2b2f33;">10</div>
<div class="t" style="left:730.50px;top:88.19px;font-size:14.5px;line-height:14.5px;font-weight:400;color:#2b2f33;">8</div>
<div class="chips" style="left:917.90px;top:84.96px;"><span class="chip">ai overviews</span><span class="chip">carousel</span><span class="chip">images</span><span class="chip">people also ask</span></div>
<div class="t" style="left:1228.70px;top:88.19px;font-size:14.5px;line-height:14.5px;font-weight:400;color:#2b2f33;">70</div>
<div class="r" style="left:19.00px;top:135.38px;width:1392.00px;height:1.00px;background:#e4e6e7;"></div>
<div class="t" style="left:30.20px;top:115.31px;font-size:14.5px;line-height:14.5px;font-weight:400;color:#2b2f33;">1-indanone flash</div>
<svg class="r" style="left:352.30px;top:115.08px" width="21" height="14" viewBox="0 0 21 14"><rect width="21" height="14" fill="#fff"/><rect y="0.00" width="21" height="1.08" fill="#d9434f"/><rect y="2.00" width="21" height="1.08" fill="#d9434f"/><rect y="4.00" width="21" height="1.08" fill="#d9434f"/><rect y="6.00" width="21" height="1.08" fill="#d9434f"/><rect y="8.00" width="21" height="1.08" fill="#d9434f"/><rect y="10.00" width="21" height="1.08" fill="#d9434f"/><rect y="12.00" width="21" height="1.08" fill="#d9434f"/><rect width="9.5" height="7.5" fill="#3c4fa0"/><circle cx="1.30" cy="1.10" r="0.35" fill="#cfd6ff"/><circle cx="3.05" cy="1.10" r="0.35" fill="#cfd6ff"/><circle cx="4.80" cy="1.10" r="0.35" fill="#cfd6ff"/><circle cx="6.55" cy="1.10" r="0.35" fill="#cfd6ff"/><circle cx="8.30" cy="1.10" r="0.35" fill="#cfd6ff"/><circle cx="2.15" cy="2.45" r="0.35" fill="#cfd6ff"/><circle cx="3.90" cy="2.45" r="0.35" fill="#cfd6ff"/><circle cx="5.65" cy="2.45" r="0.35" fill="#cfd6ff"/><circle cx="7.40" cy="2.45" r="0.35" fill="#cfd6ff"/><circle cx="9.15" cy="2.45" r="0.35" fill="#cfd6ff"/><circle cx="1.30" cy="3.80" r="0.35" fill="#cfd6ff"/><circle cx="3.05" cy="3.80" r="0.35" fill="#cfd6ff"/><circle cx="4.80" cy="3.80" r="0.35" fill="#cfd6ff"/><circle cx="6.55" cy="3.80" r="0.35" fill="#cfd6ff"/><circle cx="8.30" cy="3.80" r="0.35" fill="#cfd6ff"/><circle cx="2.15" cy="5.15" r="0.35" fill="#cfd6ff"/><circle cx="3.90" cy="5.15" r="0.35" fill="#cfd6ff"/><circle cx="5.65" cy="5.15" r="0.35" fill="#cfd6ff"/><circle cx="7.40" cy="5.15" r="0.35" fill="#cfd6ff"/><circle cx="9.15" cy="5.15" r="0.35" fill="#cfd6ff"/><circle cx="1.30" cy="6.50" r="0.35" fill="#cfd6ff"/><circle cx="3.05" cy="6.50" r="0.35" fill="#cfd6ff"/><circle cx="4.80" cy="6.50" r="0.35" fill="#cfd6ff"/><circle cx="6.55" cy="6.50" r="0.35" fill="#cfd6ff"/><circle cx="8.30" cy="6.50" r="0.35" fill="#cfd6ff"/></svg>
<div class="t" style="left:377.30px;top:115.56px;font-size:14.2px;line-height:14.2px;font-weight:400;color:#2b2f33;">US-en</div>
<svg class="r" style="left:472.50px;top:114.58px" width="17" height="16" viewBox="0 0 17 16"><path d="M1.5 2.5 Q1.5 1 3 1 H14 Q15.5 1 15.5 2.5 V10.5 Q15.5 12 14 12 H3 Q1.5 12 1.5 10.5 Z" fill="none" stroke="#3a3d40" stroke-width="2"/><rect x="1.5" y="9" width="14" height="3" fill="#3a3d40"/><rect x="7" y="12" width="3" height="2.2" fill="#3a3d40"/><rect x="5" y="13.6" width="7" height="1.6" rx="0.5" fill="#3a3d40"/></svg>
<div class="t" style="left:589.75px;top:115.31px;font-size:14.5px;line-height:14.5px;font-weight:400;color:#2b2f33;">7</div>
<div class="t" style="left:730.50px;top:115.31px;font-size:14.5px;line-height:14.5px;font-weight:400;color:#2b2f33;">4</div>
<div class="chips" style="left:917.90px;top:112.08px;"><span class="chip">ai overviews</span><span class="chip">people also ask</span><span class="chip">price</span><span class="chip">rank</span></div>
<div class="t" style="left:1228.70px;top:115.31px;font-size:14.5px;line-height:14.5px;font-weight:400;color:#2b2f33;">0</div>
<div class="r" style="left:19.00px;top:162.50px;width:1392.00px;height:1.00px;background:#e4e6e7;"></div>
<div class="t" style="left:30.20px;top:142.43px;font-size:14.5px;line-height:14.5px;font-weight:400;color:#2b2f33;">1-phenoxy-2-propanol cas no</div>
<svg class="r" style="left:352.30px;top:142.20px" width="21" height="14" viewBox="0 0 21 14"><rect width="21" height="14" fill="#fff"/><rect y="0.00" width="21" height="1.08" fill="#d9434f"/><rect y="2.00" width="21" height="1.08" fill="#d9434f"/><rect y="4.00" width="21" height="1.08" fill="#d9434f"/><rect y="6.00" width="21" height="1.08" fill="#d9434f"/><rect y="8.00" width="21" height="1.08" fill="#d9434f"/><rect y="10.00" width="21" height="1.08" fill="#d9434f"/><rect y="12.00" width="21" height="1.08" fill="#d9434f"/><rect width="9.5" height="7.5" fill="#3c4fa0"/><circle cx="1.30" cy="1.10" r="0.35" fill="#cfd6ff"/><circle cx="3.05" cy="1.10" r="0.35" fill="#cfd6ff"/><circle cx="4.80" cy="1.10" r="0.35" fill="#cfd6ff"/><circle cx="6.55" cy="1.10" r="0.35" fill="#cfd6ff"/><circle cx="8.30" cy="1.10" r="0.35" fill="#cfd6ff"/><circle cx="2.15" cy="2.45" r="0.35" fill="#cfd6ff"/><circle cx="3.90" cy="2.45" r="0.35" fill="#cfd6ff"/><circle cx="5.65" cy="2.45" r="0.35" fill="#cfd6ff"/><circle cx="7.40" cy="2.45" r="0.35" fill="#cfd6ff"/><circle cx="9.15" cy="2.45" r="0.35" fill="#cfd6ff"/><circle cx="1.30" cy="3.80" r="0.35" fill="#cfd6ff"/><circle cx="3.05" cy="3.80" r="0.35" fill="#cfd6ff"/><circle cx="4.80" cy="3.80" r="0.35" fill="#cfd6ff"/><circle cx="6.55" cy="3.80" r="0.35" fill="#cfd6ff"/><circle cx="8.30" cy="3.80" r="0.35" fill="#cfd6ff"/><circle cx="2.15" cy="5.15" r="0.35" fill="#cfd6ff"/><circle cx="3.90" cy="5.15" r="0.35" fill="#cfd6ff"/><circle cx="5.65" cy="5.15" r="0.35" fill="#cfd6ff"/><circle cx="7.40" cy="5.15" r="0.35" fill="#cfd6ff"/><circle cx="9.15" cy="5.15" r="0.35" fill="#cfd6ff"/><circle cx="1.30" cy="6.50" r="0.35" fill="#cfd6ff"/><circle cx="3.05" cy="6.50" r="0.35" fill="#cfd6ff"/><circle cx="4.80" cy="6.50" r="0.35" fill="#cfd6ff"/><circle cx="6.55" cy="6.50" r="0.35" fill="#cfd6ff"/><circle cx="8.30" cy="6.50" r="0.35" fill="#cfd6ff"/></svg>
<div class="t" style="left:377.30px;top:142.68px;font-size:14.2px;line-height:14.2px;font-weight:400;color:#2b2f33;">US-en</div>
<svg class="r" style="left:472.50px;top:141.70px" width="17" height="16" viewBox="0 0 17 16"><path d="M1.5 2.5 Q1.5 1 3 1 H14 Q15.5 1 15.5 2.5 V10.5 Q15.5 12 14 12 H3 Q1.5 12 1.5 10.5 Z" fill="none" stroke="#3a3d40" stroke-width="2"/><rect x="1.5" y="9" width="14" height="3" fill="#3a3d40"/><rect x="7" y="12" width="3" height="2.2" fill="#3a3d40"/><rect x="5" y="13.6" width="7" height="1.6" rx="0.5" fill="#3a3d40"/></svg>
<div class="t" style="left:589.75px;top:142.43px;font-size:14.5px;line-height:14.5px;font-weight:400;color:#2b2f33;">12</div>
<div class="t" style="left:730.50px;top:142.43px;font-size:14.5px;line-height:14.5px;font-weight:400;color:#2b2f33;">10</div>
<div class="chips" style="left:917.90px;top:139.20px;"><span class="chip">ai overviews</span><span class="chip">carousel</span><span class="chip">images</span><span class="chip">people also ask</span></div>
<div class="t" style="left:1228.70px;top:142.43px;font-size:14.5px;line-height:14.5px;font-weight:400;color:#2b2f33;">0</div>
<div class="r" style="left:19.00px;top:189.62px;width:1392.00px;height:1.00px;background:#e4e6e7;"></div>
<div class="t" style="left:30.20px;top:169.55px;font-size:14.5px;line-height:14.5px;font-weight:400;color:#2b2f33;">1-phenylcyclohexane</div>
<svg class="r" style="left:352.30px;top:169.32px" width="21" height="14" viewBox="0 0 21 14"><rect width="21" height="14" fill="#fff"/><rect y="0.00" width="21" height="1.08" fill="#d9434f"/><rect y="2.00" width="21" height="1.08" fill="#d9434f"/><rect y="4.00" width="21" height="1.08" fill="#d9434f"/><rect y="6.00" width="21" height="1.08" fill="#d9434f"/><rect y="8.00" width="21" height="1.08" fill="#d9434f"/><rect y="10.00" width="21" height="1.08" fill="#d9434f"/><rect y="12.00" width="21" height="1.08" fill="#d9434f"/><rect width="9.5" height="7.5" fill="#3c4fa0"/><circle cx="1.30" cy="1.10" r="0.35" fill="#cfd6ff"/><circle cx="3.05" cy="1.10" r="0.35" fill="#cfd6ff"/><circle cx="4.80" cy="1.10" r="0.35" fill="#cfd6ff"/><circle cx="6.55" cy="1.10" r="0.35" fill="#cfd6ff"/><circle cx="8.30" cy="1.10" r="0.35" fill="#cfd6ff"/><circle cx="2.15" cy="2.45" r="0.35" fill="#cfd6ff"/><circle cx="3.90" cy="2.45" r="0.35" fill="#cfd6ff"/><circle cx="5.65" cy="2.45" r="0.35" fill="#cfd6ff"/><circle cx="7.40" cy="2.45" r="0.35" fill="#cfd6ff"/><circle cx="9.15" cy="2.45" r="0.35" fill="#cfd6ff"/><circle cx="1.30" cy="3.80" r="0.35" fill="#cfd6ff"/><circle cx="3.05" cy="3.80" r="0.35" fill="#cfd6ff"/><circle cx="4.80" cy="3.80" r="0.35" fill="#cfd6ff"/><circle cx="6.55" cy="3.80" r="0.35" fill="#cfd6ff"/><circle cx="8.30" cy="3.80" r="0.35" fill="#cfd6ff"/><circle cx="2.15" cy="5.15" r="0.35" fill="#cfd6ff"/><circle cx="3.90" cy="5.15" r="0.35" fill="#cfd6ff"/><circle cx="5.65" cy="5.15" r="0.35" fill="#cfd6ff"/><circle cx="7.40" cy="5.15" r="0.35" fill="#cfd6ff"/><circle cx="9.15" cy="5.15" r="0.35" fill="#cfd6ff"/><circle cx="1.30" cy="6.50" r="0.35" fill="#cfd6ff"/><circle cx="3.05" cy="6.50" r="0.35" fill="#cfd6ff"/><circle cx="4.80" cy="6.50" r="0.35" fill="#cfd6ff"/><circle cx="6.55" cy="6.50" r="0.35" fill="#cfd6ff"/><circle cx="8.30" cy="6.50" r="0.35" fill="#cfd6ff"/></svg>
<div class="t" style="left:377.30px;top:169.80px;font-size:14.2px;line-height:14.2px;font-weight:400;color:#2b2f33;">US-en</div>
<svg class="r" style="left:474.50px;top:166.82px" width="13" height="19" viewBox="0 0 13 19"><rect x="1.5" y="1" width="10" height="17" rx="2" fill="none" stroke="#3a3d40" stroke-width="1.6"/><line x1="1.5" y1="3.6" x2="11.5" y2="3.6" stroke="#3a3d40" stroke-width="1.4"/><line x1="1.5" y1="14.5" x2="11.5" y2="14.5" stroke="#3a3d40" stroke-width="1.4"/><line x1="6.5" y1="14.5" x2="6.5" y2="18" stroke="#3a3d40" stroke-width="1.2"/></svg>
<div class="t" style="left:589.75px;top:169.55px;font-size:14.5px;line-height:14.5px;font-weight:400;color:#2b2f33;">9</div>
<div class="t" style="left:730.50px;top:169.55px;font-size:14.5px;line-height:14.5px;font-weight:400;color:#2b2f33;">6</div>
<div class="chips" style="left:917.90px;top:166.32px;"><span class="chip">ai overviews</span><span class="chip">carousel</span><span class="chip">images</span><span class="chip">price</span></div>
<div class="t" style="left:1228.70px;top:169.55px;font-size:14.5px;line-height:14.5px;font-weight:400;color:#2b2f33;">30</div>
<div class="r" style="left:19.00px;top:216.74px;width:1392.00px;height:1.00px;background:#e4e6e7;"></div>
<div class="t" style="left:30.20px;top:196.67px;font-size:14.5px;line-height:14.5px;font-weight:400;color:#2b2f33;">1-phenylpiperazine</div>
<svg class="r" style="left:352.30px;top:196.44px" width="21" height="14" viewBox="0 0 21 14"><rect width="21" height="14" fill="#fff"/><rect y="0.00" width="21" height="1.08" fill="#d9434f"/><rect y="2.00" width="21" height="1.08" fill="#d9434f"/><rect y="4.00" width="21" height="1.08" fill="#d9434f"/><rect y="6.00" width="21" height="1.08" fill="#d9434f"/><rect y="8.00" width="21" height="1.08" fill="#d9434f"/><rect y="10.00" width="21" height="1.08" fill="#d9434f"/><rect y="12.00" width="21" height="1.08" fill="#d9434f"/><rect width="9.5" height="7.5" fill="#3c4fa0"/><circle cx="1.30" cy="1.10" r="0.35" fill="#cfd6ff"/><circle cx="3.05" cy="1.10" r="0.35" fill="#cfd6ff"/><circle cx="4.80" cy="1.10" r="0.35" fill="#cfd6ff"/><circle cx="6.55" cy="1.10" r="0.35" fill="#cfd6ff"/><circle cx="8.30" cy="1.10" r="0.35" fill="#cfd6ff"/><circle cx="2.15" cy="2.45" r="0.35" fill="#cfd6ff"/><circle cx="3.90" cy="2.45" r="0.35" fill="#cfd6ff"/><circle cx="5.65" cy="2.45" r="0.35" fill="#cfd6ff"/><circle cx="7.40" cy="2.45" r="0.35" fill="#cfd6ff"/><circle cx="9.15" cy="2.45" r="0.35" fill="#cfd6ff"/><circle cx="1.30" cy="3.80" r="0.35" fill="#cfd6ff"/><circle cx="3.05" cy="3.80" r="0.35" fill="#cfd6ff"/><circle cx="4.80" cy="3.80" r="0.35" fill="#cfd6ff"/><circle cx="6.55" cy="3.80" r="0.35" fill="#cfd6ff"/><circle cx="8.30" cy="3.80" r="0.35" fill="#cfd6ff"/><circle cx="2.15" cy="5.15" r="0.35" fill="#cfd6ff"/><circle cx="3.90" cy="5.15" r="0.35" fill="#cfd6ff"/><circle cx="5.65" cy="5.15" r="0.35" fill="#cfd6ff"/><circle cx="7.40" cy="5.15" r="0.35" fill="#cfd6ff"/><circle cx="9.15" cy="5.15" r="0.35" fill="#cfd6ff"/><circle cx="1.30" cy="6.50" r="0.35" fill="#cfd6ff"/><circle cx="3.05" cy="6.50" r="0.35" fill="#cfd6ff"/><circle cx="4.80" cy="6.50" r="0.35" fill="#cfd6ff"/><circle cx="6.55" cy="6.50" r="0.35" fill="#cfd6ff"/><circle cx="8.30" cy="6.50" r="0.35" fill="#cfd6ff"/></svg>
<div class="t" style="left:377.30px;top:196.92px;font-size:14.2px;line-height:14.2px;font-weight:400;color:#2b2f33;">US-en</div>
<svg class="r" style="left:472.50px;top:195.94px" width="17" height="16" viewBox="0 0 17 16"><path d="M1.5 2.5 Q1.5 1 3 1 H14 Q15.5 1 15.5 2.5 V10.5 Q15.5 12 14 12 H3 Q1.5 12 1.5 10.5 Z" fill="none" stroke="#3a3d40" stroke-width="2"/><rect x="1.5" y="9" width="14" height="3" fill="#3a3d40"/><rect x="7" y="12" width="3" height="2.2" fill="#3a3d40"/><rect x="5" y="13.6" width="7" height="1.6" rx="0.5" fill="#3a3d40"/></svg>
<div class="t" style="left:589.75px;top:196.67px;font-size:14.5px;line-height:14.5px;font-weight:400;color:#2b2f33;">11</div>
<div class="t" style="left:730.50px;top:196.67px;font-size:14.5px;line-height:14.5px;font-weight:400;color:#2b2f33;">10</div>
<div class="chips" style="left:917.90px;top:193.44px;"><span class="chip">ai overviews</span><span class="chip">carousel</span><span class="chip">discussions and forums</span></div>
<div class="t" style="left:1228.70px;top:196.67px;font-size:14.5px;line-height:14.5px;font-weight:400;color:#2b2f33;">0</div>
<div class="r" style="left:19.00px;top:243.86px;width:1392.00px;height:1.00px;background:#e4e6e7;"></div>
<div class="t" style="left:30.20px;top:223.79px;font-size:14.5px;line-height:14.5px;font-weight:400;color:#2b2f33;">1-tetralone</div>
<svg class="r" style="left:352.30px;top:223.56px" width="21" height="14" viewBox="0 0 21 14"><rect width="21" height="14" fill="#fff"/><rect y="0.00" width="21" height="1.08" fill="#d9434f"/><rect y="2.00" width="21" height="1.08" fill="#d9434f"/><rect y="4.00" width="21" height="1.08" fill="#d9434f"/><rect y="6.00" width="21" height="1.08" fill="#d9434f"/><rect y="8.00" width="21" height="1.08" fill="#d9434f"/><rect y="10.00" width="21" height="1.08" fill="#d9434f"/><rect y="12.00" width="21" height="1.08" fill="#d9434f"/><rect width="9.5" height="7.5" fill="#3c4fa0"/><circle cx="1.30" cy="1.10" r="0.35" fill="#cfd6ff"/><circle cx="3.05" cy="1.10" r="0.35" fill="#cfd6ff"/><circle cx="4.80" cy="1.10" r="0.35" fill="#cfd6ff"/><circle cx="6.55" cy="1.10" r="0.35" fill="#cfd6ff"/><circle cx="8.30" cy="1.10" r="0.35" fill="#cfd6ff"/><circle cx="2.15" cy="2.45" r="0.35" fill="#cfd6ff"/><circle cx="3.90" cy="2.45" r="0.35" fill="#cfd6ff"/><circle cx="5.65" cy="2.45" r="0.35" fill="#cfd6ff"/><circle cx="7.40" cy="2.45" r="0.35" fill="#cfd6ff"/><circle cx="9.15" cy="2.45" r="0.35" fill="#cfd6ff"/><circle cx="1.30" cy="3.80" r="0.35" fill="#cfd6ff"/><circle cx="3.05" cy="3.80" r="0.35" fill="#cfd6ff"/><circle cx="4.80" cy="3.80" r="0.35" fill="#cfd6ff"/><circle cx="6.55" cy="3.80" r="0.35" fill="#cfd6ff"/><circle cx="8.30" cy="3.80" r="0.35" fill="#cfd6ff"/><circle cx="2.15" cy="5.15" r="0.35" fill="#cfd6ff"/><circle cx="3.90" cy="5.15" r="0.35" fill="#cfd6ff"/><circle cx="5.65" cy="5.15" r="0.35" fill="#cfd6ff"/><circle cx="7.40" cy="5.15" r="0.35" fill="#cfd6ff"/><circle cx="9.15" cy="5.15" r="0.35" fill="#cfd6ff"/><circle cx="1.30" cy="6.50" r="0.35" fill="#cfd6ff"/><circle cx="3.05" cy="6.50" r="0.35" fill="#cfd6ff"/><circle cx="4.80" cy="6.50" r="0.35" fill="#cfd6ff"/><circle cx="6.55" cy="6.50" r="0.35" fill="#cfd6ff"/><circle cx="8.30" cy="6.50" r="0.35" fill="#cfd6ff"/></svg>
<div class="t" style="left:377.30px;top:224.04px;font-size:14.2px;line-height:14.2px;font-weight:400;color:#2b2f33;">US-en</div>
<svg class="r" style="left:472.50px;top:223.06px" width="17" height="16" viewBox="0 0 17 16"><path d="M1.5 2.5 Q1.5 1 3 1 H14 Q15.5 1 15.5 2.5 V10.5 Q15.5 12 14 12 H3 Q1.5 12 1.5 10.5 Z" fill="none" stroke="#3a3d40" stroke-width="2"/><rect x="1.5" y="9" width="14" height="3" fill="#3a3d40"/><rect x="7" y="12" width="3" height="2.2" fill="#3a3d40"/><rect x="5" y="13.6" width="7" height="1.6" rx="0.5" fill="#3a3d40"/></svg>
<div class="t" style="left:589.75px;top:223.79px;font-size:14.5px;line-height:14.5px;font-weight:400;color:#2b2f33;">11</div>
<div class="t" style="left:730.50px;top:223.79px;font-size:14.5px;line-height:14.5px;font-weight:400;color:#2b2f33;">10</div>
<div class="chips" style="left:917.90px;top:220.56px;"><span class="chip">ai overviews</span><span class="chip">carousel</span><span class="chip">discussions and forums</span></div>
<div class="t" style="left:1228.70px;top:223.79px;font-size:14.5px;line-height:14.5px;font-weight:400;color:#2b2f33;">0</div>
<div class="r" style="left:19.00px;top:270.98px;width:1392.00px;height:1.00px;background:#e4e6e7;"></div>
<div class="t" style="left:30.20px;top:250.91px;font-size:14.5px;line-height:14.5px;font-weight:400;color:#2b2f33;">2-bromopyridine</div>
<svg class="r" style="left:352.30px;top:250.68px" width="21" height="14" viewBox="0 0 21 14"><rect width="21" height="14" fill="#fff"/><rect y="0.00" width="21" height="1.08" fill="#d9434f"/><rect y="2.00" width="21" height="1.08" fill="#d9434f"/><rect y="4.00" width="21" height="1.08" fill="#d9434f"/><rect y="6.00" width="21" height="1.08" fill="#d9434f"/><rect y="8.00" width="21" height="1.08" fill="#d9434f"/><rect y="10.00" width="21" height="1.08" fill="#d9434f"/><rect y="12.00" width="21" height="1.08" fill="#d9434f"/><rect width="9.5" height="7.5" fill="#3c4fa0"/><circle cx="1.30" cy="1.10" r="0.35" fill="#cfd6ff"/><circle cx="3.05" cy="1.10" r="0.35" fill="#cfd6ff"/><circle cx="4.80" cy="1.10" r="0.35" fill="#cfd6ff"/><circle cx="6.55" cy="1.10" r="0.35" fill="#cfd6ff"/><circle cx="8.30" cy="1.10" r="0.35" fill="#cfd6ff"/><circle cx="2.15" cy="2.45" r="0.35" fill="#cfd6ff"/><circle cx="3.90" cy="2.45" r="0.35" fill="#cfd6ff"/><circle cx="5.65" cy="2.45" r="0.35" fill="#cfd6ff"/><circle cx="7.40" cy="2.45" r="0.35" fill="#cfd6ff"/><circle cx="9.15" cy="2.45" r="0.35" fill="#cfd6ff"/><circle cx="1.30" cy="3.80" r="0.35" fill="#cfd6ff"/><circle cx="3.05" cy="3.80" r="0.35" fill="#cfd6ff"/><circle cx="4.80" cy="3.80" r="0.35" fill="#cfd6ff"/><circle cx="6.55" cy="3.80" r="0.35" fill="#cfd6ff"/><circle cx="8.30" cy="3.80" r="0.35" fill="#cfd6ff"/><circle cx="2.15" cy="5.15" r="0.35" fill="#cfd6ff"/><circle cx="3.90" cy="5.15" r="0.35" fill="#cfd6ff"/><circle cx="5.65" cy="5.15" r="0.35" fill="#cfd6ff"/><circle cx="7.40" cy="5.15" r="0.35" fill="#cfd6ff"/><circle cx="9.15" cy="5.15" r="0.35" fill="#cfd6ff"/><circle cx="1.30" cy="6.50" r="0.35" fill="#cfd6ff"/><circle cx="3.05" cy="6.50" r="0.35" fill="#cfd6ff"/><circle cx="4.80" cy="6.50" r="0.35" fill="#cfd6ff"/><circle cx="6.55" cy="6.50" r="0.35" fill="#cfd6ff"/><circle cx="8.30" cy="6.50" r="0.35" fill="#cfd6ff"/></svg>
<div class="t" style="left:377.30px;top:251.16px;font-size:14.2px;line-height:14.2px;font-weight:400;color:#2b2f33;">US-en</div>
<svg class="r" style="left:472.50px;top:250.18px" width="17" height="16" viewBox="0 0 17 16"><path d="M1.5 2.5 Q1.5 1 3 1 H14 Q15.5 1 15.5 2.5 V10.5 Q15.5 12 14 12 H3 Q1.5 12 1.5 10.5 Z" fill="none" stroke="#3a3d40" stroke-width="2"/><rect x="1.5" y="9" width="14" height="3" fill="#3a3d40"/><rect x="7" y="12" width="3" height="2.2" fill="#3a3d40"/><rect x="5" y="13.6" width="7" height="1.6" rx="0.5" fill="#3a3d40"/></svg>
<div class="t" style="left:589.75px;top:250.91px;font-size:14.5px;line-height:14.5px;font-weight:400;color:#2b2f33;">11</div>
<div class="t" style="left:730.50px;top:250.91px;font-size:14.5px;line-height:14.5px;font-weight:400;color:#2b2f33;">9</div>
<div class="chips" style="left:917.90px;top:247.68px;"><span class="chip">ai overviews</span><span class="chip">carousel</span><span class="chip">images</span><span class="chip">people also ask</span></div>
<div class="t" style="left:1228.70px;top:250.91px;font-size:14.5px;line-height:14.5px;font-weight:400;color:#2b2f33;">0</div>
<div class="r" style="left:19.00px;top:298.10px;width:1392.00px;height:1.00px;background:#e4e6e7;"></div>
<div class="t" style="left:30.20px;top:278.03px;font-size:14.5px;line-height:14.5px;font-weight:400;color:#2b2f33;">2-methylfuran</div>
<svg class="r" style="left:352.30px;top:277.80px" width="21" height="14" viewBox="0 0 21 14"><rect width="21" height="14" fill="#fff"/><rect y="0.00" width="21" height="1.08" fill="#d9434f"/><rect y="2.00" width="21" height="1.08" fill="#d9434f"/><rect y="4.00" width="21" height="1.08" fill="#d9434f"/><rect y="6.00" width="21" height="1.08" fill="#d9434f"/><rect y="8.00" width="21" height="1.08" fill="#d9434f"/><rect y="10.00" width="21" height="1.08" fill="#d9434f"/><rect y="12.00" width="21" height="1.08" fill="#d9434f"/><rect width="9.5" height="7.5" fill="#3c4fa0"/><circle cx="1.30" cy="1.10" r="0.35" fill="#cfd6ff"/><circle cx="3.05" cy="1.10" r="0.35" fill="#cfd6ff"/><circle cx="4.80" cy="1.10" r="0.35" fill="#cfd6ff"/><circle cx="6.55" cy="1.10" r="0.35" fill="#cfd6ff"/><circle cx="8.30" cy="1.10" r="0.35" fill="#cfd6ff"/><circle cx="2.15" cy="2.45" r="0.35" fill="#cfd6ff"/><circle cx="3.90" cy="2.45" r="0.35" fill="#cfd6ff"/><circle cx="5.65" cy="2.45" r="0.35" fill="#cfd6ff"/><circle cx="7.40" cy="2.45" r="0.35" fill="#cfd6ff"/><circle cx="9.15" cy="2.45" r="0.35" fill="#cfd6ff"/><circle cx="1.30" cy="3.80" r="0.35" fill="#cfd6ff"/><circle cx="3.05" cy="3.80" r="0.35" fill="#cfd6ff"/><circle cx="4.80" cy="3.80" r="0.35" fill="#cfd6ff"/><circle cx="6.55" cy="3.80" r="0.35" fill="#cfd6ff"/><circle cx="8.30" cy="3.80" r="0.35" fill="#cfd6ff"/><circle cx="2.15" cy="5.15" r="0.35" fill="#cfd6ff"/><circle cx="3.90" cy="5.15" r="0.35" fill="#cfd6ff"/><circle cx="5.65" cy="5.15" r="0.35" fill="#cfd6ff"/><circle cx="7.40" cy="5.15" r="0.35" fill="#cfd6ff"/><circle cx="9.15" cy="5.15" r="0.35" fill="#cfd6ff"/><circle cx="1.30" cy="6.50" r="0.35" fill="#cfd6ff"/><circle cx="3.05" cy="6.50" r="0.35" fill="#cfd6ff"/><circle cx="4.80" cy="6.50" r="0.35" fill="#cfd6ff"/><circle cx="6.55" cy="6.50" r="0.35" fill="#cfd6ff"/><circle cx="8.30" cy="6.50" r="0.35" fill="#cfd6ff"/></svg>
<div class="t" style="left:377.30px;top:278.28px;font-size:14.2px;line-height:14.2px;font-weight:400;color:#2b2f33;">US-en</div>
<svg class="r" style="left:472.50px;top:277.30px" width="17" height="16" viewBox="0 0 17 16"><path d="M1.5 2.5 Q1.5 1 3 1 H14 Q15.5 1 15.5 2.5 V10.5 Q15.5 12 14 12 H3 Q1.5 12 1.5 10.5 Z" fill="none" stroke="#3a3d40" stroke-width="2"/><rect x="1.5" y="9" width="14" height="3" fill="#3a3d40"/><rect x="7" y="12" width="3" height="2.2" fill="#3a3d40"/><rect x="5" y="13.6" width="7" height="1.6" rx="0.5" fill="#3a3d40"/></svg>
<div class="t" style="left:589.75px;top:278.03px;font-size:14.5px;line-height:14.5px;font-weight:400;color:#2b2f33;">11</div>
<div class="t" style="left:730.50px;top:278.03px;font-size:14.5px;line-height:14.5px;font-weight:400;color:#2b2f33;">10</div>
<div class="chips" style="left:917.90px;top:274.80px;"><span class="chip">ai overviews</span><span class="chip">carousel</span><span class="chip">images</span><span class="chip">people also ask</span></div>
<div class="t" style="left:1228.70px;top:278.03px;font-size:14.5px;line-height:14.5px;font-weight:400;color:#2b2f33;">0</div>
<div class="r" style="left:19.00px;top:325.22px;width:1392.00px;height:1.00px;background:#e4e6e7;"></div>
<div class="t" style="left:30.20px;top:305.15px;font-size:14.5px;line-height:14.5px;font-weight:400;color:#2b2f33;">3-chloropropionic acid</div>
<svg class="r" style="left:352.30px;top:304.92px" width="21" height="14" viewBox="0 0 21 14"><rect width="21" height="14" fill="#fff"/><rect y="0.00" width="21" height="1.08" fill="#d9434f"/><rect y="2.00" width="21" height="1.08" fill="#d9434f"/><rect y="4.00" width="21" height="1.08" fill="#d9434f"/><rect y="6.00" width="21" height="1.08" fill="#d9434f"/><rect y="8.00" width="21" height="1.08" fill="#d9434f"/><rect y="10.00" width="21" height="1.08" fill="#d9434f"/><rect y="12.00" width="21" height="1.08" fill="#d9434f"/><rect width="9.5" height="7.5" fill="#3c4fa0"/><circle cx="1.30" cy="1.10" r="0.35" fill="#cfd6ff"/><circle cx="3.05" cy="1.10" r="0.35" fill="#cfd6ff"/><circle cx="4.80" cy="1.10" r="0.35" fill="#cfd6ff"/><circle cx="6.55" cy="1.10" r="0.35" fill="#cfd6ff"/><circle cx="8.30" cy="1.10" r="0.35" fill="#cfd6ff"/><circle cx="2.15" cy="2.45" r="0.35" fill="#cfd6ff"/><circle cx="3.90" cy="2.45" r="0.35" fill="#cfd6ff"/><circle cx="5.65" cy="2.45" r="0.35" fill="#cfd6ff"/><circle cx="7.40" cy="2.45" r="0.35" fill="#cfd6ff"/><circle cx="9.15" cy="2.45" r="0.35" fill="#cfd6ff"/><circle cx="1.30" cy="3.80" r="0.35" fill="#cfd6ff"/><circle cx="3.05" cy="3.80" r="0.35" fill="#cfd6ff"/><circle cx="4.80" cy="3.80" r="0.35" fill="#cfd6ff"/><circle cx="6.55" cy="3.80" r="0.35" fill="#cfd6ff"/><circle cx="8.30" cy="3.80" r="0.35" fill="#cfd6ff"/><circle cx="2.15" cy="5.15" r="0.35" fill="#cfd6ff"/><circle cx="3.90" cy="5.15" r="0.35" fill="#cfd6ff"/><circle cx="5.65" cy="5.15" r="0.35" fill="#cfd6ff"/><circle cx="7.40" cy="5.15" r="0.35" fill="#cfd6ff"/><circle cx="9.15" cy="5.15" r="0.35" fill="#cfd6ff"/><circle cx="1.30" cy="6.50" r="0.35" fill="#cfd6ff"/><circle cx="3.05" cy="6.50" r="0.35" fill="#cfd6ff"/><circle cx="4.80" cy="6.50" r="0.35" fill="#cfd6ff"/><circle cx="6.55" cy="6.50" r="0.35" fill="#cfd6ff"/><circle cx="8.30" cy="6.50" r="0.35" fill="#cfd6ff"/></svg>
<div class="t" style="left:377.30px;top:305.40px;font-size:14.2px;line-height:14.2px;font-weight:400;color:#2b2f33;">US-en</div>
<svg class="r" style="left:472.50px;top:304.42px" width="17" height="16" viewBox="0 0 17 16"><path d="M1.5 2.5 Q1.5 1 3 1 H14 Q15.5 1 15.5 2.5 V10.5 Q15.5 12 14 12 H3 Q1.5 12 1.5 10.5 Z" fill="none" stroke="#3a3d40" stroke-width="2"/><rect x="1.5" y="9" width="14" height="3" fill="#3a3d40"/><rect x="7" y="12" width="3" height="2.2" fill="#3a3d40"/><rect x="5" y="13.6" width="7" height="1.6" rx="0.5" fill="#3a3d40"/></svg>
<div class="t" style="left:589.75px;top:305.15px;font-size:14.5px;line-height:14.5px;font-weight:400;color:#2b2f33;">11</div>
<div class="t" style="left:730.50px;top:305.15px;font-size:14.5px;line-height:14.5px;font-weight:400;color:#2b2f33;">9</div>
<div class="chips" style="left:917.90px;top:301.92px;"><span class="chip">ai overviews</span><span class="chip">carousel</span><span class="chip">images</span><span class="chip">people also ask</span></div>
<div class="t" style="left:1228.70px;top:305.15px;font-size:14.5px;line-height:14.5px;font-weight:400;color:#2b2f33;">110</div>
<div class="r" style="left:19.00px;top:352.34px;width:1392.00px;height:1.00px;background:#e4e6e7;"></div>
<div class="t" style="left:30.20px;top:332.27px;font-size:14.5px;line-height:14.5px;font-weight:400;color:#2b2f33;">4-aminophenol</div>
<svg class="r" style="left:352.30px;top:332.04px" width="21" height="14" viewBox="0 0 21 14"><rect width="21" height="14" fill="#fff"/><rect y="0.00" width="21" height="1.08" fill="#d9434f"/><rect y="2.00" width="21" height="1.08" fill="#d9434f"/><rect y="4.00" width="21" height="1.08" fill="#d9434f"/><rect y="6.00" width="21" height="1.08" fill="#d9434f"/><rect y="8.00" width="21" height="1.08" fill="#d9434f"/><rect y="10.00" width="21" height="1.08" fill="#d9434f"/><rect y="12.00" width="21" height="1.08" fill="#d9434f"/><rect width="9.5" height="7.5" fill="#3c4fa0"/><circle cx="1.30" cy="1.10" r="0.35" fill="#cfd6ff"/><circle cx="3.05" cy="1.10" r="0.35" fill="#cfd6ff"/><circle cx="4.80" cy="1.10" r="0.35" fill="#cfd6ff"/><circle cx="6.55" cy="1.10" r="0.35" fill="#cfd6ff"/><circle cx="8.30" cy="1.10" r="0.35" fill="#cfd6ff"/><circle cx="2.15" cy="2.45" r="0.35" fill="#cfd6ff"/><circle cx="3.90" cy="2.45" r="0.35" fill="#cfd6ff"/><circle cx="5.65" cy="2.45" r="0.35" fill="#cfd6ff"/><circle cx="7.40" cy="2.45" r="0.35" fill="#cfd6ff"/><circle cx="9.15" cy="2.45" r="0.35" fill="#cfd6ff"/><circle cx="1.30" cy="3.80" r="0.35" fill="#cfd6ff"/><circle cx="3.05" cy="3.80" r="0.35" fill="#cfd6ff"/><circle cx="4.80" cy="3.80" r="0.35" fill="#cfd6ff"/><circle cx="6.55" cy="3.80" r="0.35" fill="#cfd6ff"/><circle cx="8.30" cy="3.80" r="0.35" fill="#cfd6ff"/><circle cx="2.15" cy="5.15" r="0.35" fill="#cfd6ff"/><circle cx="3.90" cy="5.15" r="0.35" fill="#cfd6ff"/><circle cx="5.65" cy="5.15" r="0.35" fill="#cfd6ff"/><circle cx="7.40" cy="5.15" r="0.35" fill="#cfd6ff"/><circle cx="9.15" cy="5.15" r="0.35" fill="#cfd6ff"/><circle cx="1.30" cy="6.50" r="0.35" fill="#cfd6ff"/><circle cx="3.05" cy="6.50" r="0.35" fill="#cfd6ff"/><circle cx="4.80" cy="6.50" r="0.35" fill="#cfd6ff"/><circle cx="6.55" cy="6.50" r="0.35" fill="#cfd6ff"/><circle cx="8.30" cy="6.50" r="0.35" fill="#cfd6ff"/></svg>
<div class="t" style="left:377.30px;top:332.52px;font-size:14.2px;line-height:14.2px;font-weight:400;color:#2b2f33;">US-en</div>
<svg class="r" style="left:472.50px;top:331.54px" width="17" height="16" viewBox="0 0 17 16"><path d="M1.5 2.5 Q1.5 1 3 1 H14 Q15.5 1 15.5 2.5 V10.5 Q15.5 12 14 12 H3 Q1.5 12 1.5 10.5 Z" fill="none" stroke="#3a3d40" stroke-width="2"/><rect x="1.5" y="9" width="14" height="3" fill="#3a3d40"/><rect x="7" y="12" width="3" height="2.2" fill="#3a3d40"/><rect x="5" y="13.6" width="7" height="1.6" rx="0.5" fill="#3a3d40"/></svg>
<div class="t" style="left:589.75px;top:332.27px;font-size:14.5px;line-height:14.5px;font-weight:400;color:#2b2f33;">11</div>
<div class="t" style="left:730.50px;top:332.27px;font-size:14.5px;line-height:14.5px;font-weight:400;color:#2b2f33;">10</div>
<div class="chips" style="left:917.90px;top:329.04px;"><span class="chip">ai overviews</span><span class="chip">answers (list)</span><span class="chip">carousel</span><span class="chip">images</span></div>
<div class="t" style="left:1228.70px;top:332.27px;font-size:14.5px;line-height:14.5px;font-weight:400;color:#2b2f33;">0</div>
<div class="r" style="left:19.00px;top:379.46px;width:1392.00px;height:1.00px;background:#e4e6e7;"></div>
<div class="t" style="left:30.20px;top:359.39px;font-size:14.5px;line-height:14.5px;font-weight:400;color:#2b2f33;">4-nitroaniline</div>
<svg class="r" style="left:352.30px;top:359.16px" width="21" height="14" viewBox="0 0 21 14"><rect width="21" height="14" fill="#fff"/><rect y="0.00" width="21" height="1.08" fill="#d9434f"/><rect y="2.00" width="21" height="1.08" fill="#d9434f"/><rect y="4.00" width="21" height="1.08" fill="#d9434f"/><rect y="6.00" width="21" height="1.08" fill="#d9434f"/><rect y="8.00" width="21" height="1.08" fill="#d9434f"/><rect y="10.00" width="21" height="1.08" fill="#d9434f"/><rect y="12.00" width="21" height="1.08" fill="#d9434f"/><rect width="9.5" height="7.5" fill="#3c4fa0"/><circle cx="1.30" cy="1.10" r="0.35" fill="#cfd6ff"/><circle cx="3.05" cy="1.10" r="0.35" fill="#cfd6ff"/><circle cx="4.80" cy="1.10" r="0.35" fill="#cfd6ff"/><circle cx="6.55" cy="1.10" r="0.35" fill="#cfd6ff"/><circle cx="8.30" cy="1.10" r="0.35" fill="#cfd6ff"/><circle cx="2.15" cy="2.45" r="0.35" fill="#cfd6ff"/><circle cx="3.90" cy="2.45" r="0.35" fill="#cfd6ff"/><circle cx="5.65" cy="2.45" r="0.35" fill="#cfd6ff"/><circle cx="7.40" cy="2.45" r="0.35" fill="#cfd6ff"/><circle cx="9.15" cy="2.45" r="0.35" fill="#cfd6ff"/><circle cx="1.30" cy="3.80" r="0.35" fill="#cfd6ff"/><circle cx="3.05" cy="3.80" r="0.35" fill="#cfd6ff"/><circle cx="4.80" cy="3.80" r="0.35" fill="#cfd6ff"/><circle cx="6.55" cy="3.80" r="0.35" fill="#cfd6ff"/><circle cx="8.30" cy="3.80" r="0.35" fill="#cfd6ff"/><circle cx="2.15" cy="5.15" r="0.35" fill="#cfd6ff"/><circle cx="3.90" cy="5.15" r="0.35" fill="#cfd6ff"/><circle cx="5.65" cy="5.15" r="0.35" fill="#cfd6ff"/><circle cx="7.40" cy="5.15" r="0.35" fill="#cfd6ff"/><circle cx="9.15" cy="5.15" r="0.35" fill="#cfd6ff"/><circle cx="1.30" cy="6.50" r="0.35" fill="#cfd6ff"/><circle cx="3.05" cy="6.50" r="0.35" fill="#cfd6ff"/><circle cx="4.80" cy="6.50" r="0.35" fill="#cfd6ff"/><circle cx="6.55" cy="6.50" r="0.35" fill="#cfd6ff"/><circle cx="8.30" cy="6.50" r="0.35" fill="#cfd6ff"/></svg>
<div class="t" style="left:377.30px;top:359.64px;font-size:14.2px;line-height:14.2px;font-weight:400;color:#2b2f33;">US-en</div>
<svg class="r" style="left:472.50px;top:358.66px" width="17" height="16" viewBox="0 0 17 16"><path d="M1.5 2.5 Q1.5 1 3 1 H14 Q15.5 1 15.5 2.5 V10.5 Q15.5 12 14 12 H3 Q1.5 12 1.5 10.5 Z" fill="none" stroke="#3a3d40" stroke-width="2"/><rect x="1.5" y="9" width="14" height="3" fill="#3a3d40"/><rect x="7" y="12" width="3" height="2.2" fill="#3a3d40"/><rect x="5" y="13.6" width="7" height="1.6" rx="0.5" fill="#3a3d40"/></svg>
<div class="t" style="left:589.75px;top:359.39px;font-size:14.5px;line-height:14.5px;font-weight:400;color:#2b2f33;">11</div>
<div class="t" style="left:730.50px;top:359.39px;font-size:14.5px;line-height:14.5px;font-weight:400;color:#2b2f33;">10</div>
<div class="chips" style="left:917.90px;top:356.16px;"><span class="chip">ai overviews</span><span class="chip">carousel</span><span class="chip">images</span><span class="chip">people also ask</span></div>
<div class="t" style="left:1228.70px;top:359.39px;font-size:14.5px;line-height:14.5px;font-weight:400;color:#2b2f33;">390</div>
<div class="r" style="left:19.00px;top:406.58px;width:1392.00px;height:1.00px;background:#e4e6e7;"></div>
<div class="t" style="left:30.20px;top:386.51px;font-size:14.5px;line-height:14.5px;font-weight:400;color:#2b2f33;">acetone</div>
<svg class="r" style="left:352.30px;top:386.28px" width="21" height="14" viewBox="0 0 21 14"><rect width="21" height="14" fill="#fff"/><rect y="0.00" width="21" height="1.08" fill="#d9434f"/><rect y="2.00" width="21" height="1.08" fill="#d9434f"/><rect y="4.00" width="21" height="1.08" fill="#d9434f"/><rect y="6.00" width="21" height="1.08" fill="#d9434f"/><rect y="8.00" width="21" height="1.08" fill="#d9434f"/><rect y="10.00" width="21" height="1.08" fill="#d9434f"/><rect y="12.00" width="21" height="1.08" fill="#d9434f"/><rect width="9.5" height="7.5" fill="#3c4fa0"/><circle cx="1.30" cy="1.10" r="0.35" fill="#cfd6ff"/><circle cx="3.05" cy="1.10" r="0.35" fill="#cfd6ff"/><circle cx="4.80" cy="1.10" r="0.35" fill="#cfd6ff"/><circle cx="6.55" cy="1.10" r="0.35" fill="#cfd6ff"/><circle cx="8.30" cy="1.10" r="0.35" fill="#cfd6ff"/><circle cx="2.15" cy="2.45" r="0.35" fill="#cfd6ff"/><circle cx="3.90" cy="2.45" r="0.35" fill="#cfd6ff"/><circle cx="5.65" cy="2.45" r="0.35" fill="#cfd6ff"/><circle cx="7.40" cy="2.45" r="0.35" fill="#cfd6ff"/><circle cx="9.15" cy="2.45" r="0.35" fill="#cfd6ff"/><circle cx="1.30" cy="3.80" r="0.35" fill="#cfd6ff"/><circle cx="3.05" cy="3.80" r="0.35" fill="#cfd6ff"/><circle cx="4.80" cy="3.80" r="0.35" fill="#cfd6ff"/><circle cx="6.55" cy="3.80" r="0.35" fill="#cfd6ff"/><circle cx="8.30" cy="3.80" r="0.35" fill="#cfd6ff"/><circle cx="2.15" cy="5.15" r="0.35" fill="#cfd6ff"/><circle cx="3.90" cy="5.15" r="0.35" fill="#cfd6ff"/><circle cx="5.65" cy="5.15" r="0.35" fill="#cfd6ff"/><circle cx="7.40" cy="5.15" r="0.35" fill="#cfd6ff"/><circle cx="9.15" cy="5.15" r="0.35" fill="#cfd6ff"/><circle cx="1.30" cy="6.50" r="0.35" fill="#cfd6ff"/><circle cx="3.05" cy="6.50" r="0.35" fill="#cfd6ff"/><circle cx="4.80" cy="6.50" r="0.35" fill="#cfd6ff"/><circle cx="6.55" cy="6.50" r="0.35" fill="#cfd6ff"/><circle cx="8.30" cy="6.50" r="0.35" fill="#cfd6ff"/></svg>
<div class="t" style="left:377.30px;top:386.76px;font-size:14.2px;line-height:14.2px;font-weight:400;color:#2b2f33;">US-en</div>
<svg class="r" style="left:472.50px;top:385.78px" width="17" height="16" viewBox="0 0 17 16"><path d="M1.5 2.5 Q1.5 1 3 1 H14 Q15.5 1 15.5 2.5 V10.5 Q15.5 12 14 12 H3 Q1.5 12 1.5 10.5 Z" fill="none" stroke="#3a3d40" stroke-width="2"/><rect x="1.5" y="9" width="14" height="3" fill="#3a3d40"/><rect x="7" y="12" width="3" height="2.2" fill="#3a3d40"/><rect x="5" y="13.6" width="7" height="1.6" rx="0.5" fill="#3a3d40"/></svg>
<div class="t" style="left:589.75px;top:386.51px;font-size:14.5px;line-height:14.5px;font-weight:400;color:#2b2f33;">11</div>
<div class="t" style="left:730.50px;top:386.51px;font-size:14.5px;line-height:14.5px;font-weight:400;color:#2b2f33;">9</div>
<div class="chips" style="left:917.90px;top:383.28px;"><span class="chip">ai overviews</span><span class="chip">carousel</span><span class="chip">images</span><span class="chip">people also ask</span></div>
<div class="t" style="left:1228.70px;top:386.51px;font-size:14.5px;line-height:14.5px;font-weight:400;color:#2b2f33;">30</div>
<div class="r" style="left:19.00px;top:433.70px;width:1392.00px;height:1.00px;background:#e4e6e7;"></div>
<div class="t" style="left:30.20px;top:413.63px;font-size:14.5px;line-height:14.5px;font-weight:400;color:#2b2f33;">acetonitrile</div>
<svg class="r" style="left:352.30px;top:413.40px" width="21" height="14" viewBox="0 0 21 14"><rect width="21" height="14" fill="#fff"/><rect y="0.00" width="21" height="1.08" fill="#d9434f"/><rect y="2.00" width="21" height="1.08" fill="#d9434f"/><rect y="4.00" width="21" height="1.08" fill="#d9434f"/><rect y="6.00" width="21" height="1.08" fill="#d9434f"/><rect y="8.00" width="21" height="1.08" fill="#d9434f"/><rect y="10.00" width="21" height="1.08" fill="#d9434f"/><rect y="12.00" width="21" height="1.08" fill="#d9434f"/><rect width="9.5" height="7.5" fill="#3c4fa0"/><circle cx="1.30" cy="1.10" r="0.35" fill="#cfd6ff"/><circle cx="3.05" cy="1.10" r="0.35" fill="#cfd6ff"/><circle cx="4.80" cy="1.10" r="0.35" fill="#cfd6ff"/><circle cx="6.55" cy="1.10" r="0.35" fill="#cfd6ff"/><circle cx="8.30" cy="1.10" r="0.35" fill="#cfd6ff"/><circle cx="2.15" cy="2.45" r="0.35" fill="#cfd6ff"/><circle cx="3.90" cy="2.45" r="0.35" fill="#cfd6ff"/><circle cx="5.65" cy="2.45" r="0.35" fill="#cfd6ff"/><circle cx="7.40" cy="2.45" r="0.35" fill="#cfd6ff"/><circle cx="9.15" cy="2.45" r="0.35" fill="#cfd6ff"/><circle cx="1.30" cy="3.80" r="0.35" fill="#cfd6ff"/><circle cx="3.05" cy="3.80" r="0.35" fill="#cfd6ff"/><circle cx="4.80" cy="3.80" r="0.35" fill="#cfd6ff"/><circle cx="6.55" cy="3.80" r="0.35" fill="#cfd6ff"/><circle cx="8.30" cy="3.80" r="0.35" fill="#cfd6ff"/><circle cx="2.15" cy="5.15" r="0.35" fill="#cfd6ff"/><circle cx="3.90" cy="5.15" r="0.35" fill="#cfd6ff"/><circle cx="5.65" cy="5.15" r="0.35" fill="#cfd6ff"/><circle cx="7.40" cy="5.15" r="0.35" fill="#cfd6ff"/><circle cx="9.15" cy="5.15" r="0.35" fill="#cfd6ff"/><circle cx="1.30" cy="6.50" r="0.35" fill="#cfd6ff"/><circle cx="3.05" cy="6.50" r="0.35" fill="#cfd6ff"/><circle cx="4.80" cy="6.50" r="0.35" fill="#cfd6ff"/><circle cx="6.55" cy="6.50" r="0.35" fill="#cfd6ff"/><circle cx="8.30" cy="6.50" r="0.35" fill="#cfd6ff"/></svg>
<div class="t" style="left:377.30px;top:413.88px;font-size:14.2px;line-height:14.2px;font-weight:400;color:#2b2f33;">US-en</div>
<svg class="r" style="left:472.50px;top:412.90px" width="17" height="16" viewBox="0 0 17 16"><path d="M1.5 2.5 Q1.5 1 3 1 H14 Q15.5 1 15.5 2.5 V10.5 Q15.5 12 14 12 H3 Q1.5 12 1.5 10.5 Z" fill="none" stroke="#3a3d40" stroke-width="2"/><rect x="1.5" y="9" width="14" height="3" fill="#3a3d40"/><rect x="7" y="12" width="3" height="2.2" fill="#3a3d40"/><rect x="5" y="13.6" width="7" height="1.6" rx="0.5" fill="#3a3d40"/></svg>
<div class="t" style="left:589.75px;top:413.63px;font-size:14.5px;line-height:14.5px;font-weight:400;color:#2b2f33;">11</div>
<div class="t" style="left:730.50px;top:413.63px;font-size:14.5px;line-height:14.5px;font-weight:400;color:#2b2f33;">9</div>
<div class="chips" style="left:917.90px;top:410.40px;"><span class="chip">ai overviews</span><span class="chip">answers (paragraph)</span><span class="chip">carousel</span></div>
<div class="t" style="left:1228.70px;top:413.63px;font-size:14.5px;line-height:14.5px;font-weight:400;color:#2b2f33;">30</div>
<div class="r" style="left:19.00px;top:460.82px;width:1392.00px;height:1.00px;background:#e4e6e7;"></div>
<div class="t" style="left:30.20px;top:440.75px;font-size:14.5px;line-height:14.5px;font-weight:400;color:#2b2f33;">acrylamide</div>
<svg class="r" style="left:352.30px;top:440.52px" width="21" height="14" viewBox="0 0 21 14"><rect width="21" height="14" fill="#fff"/><rect y="0.00" width="21" height="1.08" fill="#d9434f"/><rect y="2.00" width="21" height="1.08" fill="#d9434f"/><rect y="4.00" width="21" height="1.08" fill="#d9434f"/><rect y="6.00" width="21" height="1.08" fill="#d9434f"/><rect y="8.00" width="21" height="1.08" fill="#d9434f"/><rect y="10.00" width="21" height="1.08" fill="#d9434f"/><rect y="12.00" width="21" height="1.08" fill="#d9434f"/><rect width="9.5" height="7.5" fill="#3c4fa0"/><circle cx="1.30" cy="1.10" r="0.35" fill="#cfd6ff"/><circle cx="3.05" cy="1.10" r="0.35" fill="#cfd6ff"/><circle cx="4.80" cy="1.10" r="0.35" fill="#cfd6ff"/><circle cx="6.55" cy="1.10" r="0.35" fill="#cfd6ff"/><circle cx="8.30" cy="1.10" r="0.35" fill="#cfd6ff"/><circle cx="2.15" cy="2.45" r="0.35" fill="#cfd6ff"/><circle cx="3.90" cy="2.45" r="0.35" fill="#cfd6ff"/><circle cx="5.65" cy="2.45" r="0.35" fill="#cfd6ff"/><circle cx="7.40" cy="2.45" r="0.35" fill="#cfd6ff"/><circle cx="9.15" cy="2.45" r="0.35" fill="#cfd6ff"/><circle cx="1.30" cy="3.80" r="0.35" fill="#cfd6ff"/><circle cx="3.05" cy="3.80" r="0.35" fill="#cfd6ff"/><circle cx="4.80" cy="3.80" r="0.35" fill="#cfd6ff"/><circle cx="6.55" cy="3.80" r="0.35" fill="#cfd6ff"/><circle cx="8.30" cy="3.80" r="0.35" fill="#cfd6ff"/><circle cx="2.15" cy="5.15" r="0.35" fill="#cfd6ff"/><circle cx="3.90" cy="5.15" r="0.35" fill="#cfd6ff"/><circle cx="5.65" cy="5.15" r="0.35" fill="#cfd6ff"/><circle cx="7.40" cy="5.15" r="0.35" fill="#cfd6ff"/><circle cx="9.15" cy="5.15" r="0.35" fill="#cfd6ff"/><circle cx="1.30" cy="6.50" r="0.35" fill="#cfd6ff"/><circle cx="3.05" cy="6.50" r="0.35" fill="#cfd6ff"/><circle cx="4.80" cy="6.50" r="0.35" fill="#cfd6ff"/><circle cx="6.55" cy="6.50" r="0.35" fill="#cfd6ff"/><circle cx="8.30" cy="6.50" r="0.35" fill="#cfd6ff"/></svg>
<div class="t" style="left:377.30px;top:441.00px;font-size:14.2px;line-height:14.2px;font-weight:400;color:#2b2f33;">US-en</div>
<svg class="r" style="left:472.50px;top:440.02px" width="17" height="16" viewBox="0 0 17 16"><path d="M1.5 2.5 Q1.5 1 3 1 H14 Q15.5 1 15.5 2.5 V10.5 Q15.5 12 14 12 H3 Q1.5 12 1.5 10.5 Z" fill="none" stroke="#3a3d40" stroke-width="2"/><rect x="1.5" y="9" width="14" height="3" fill="#3a3d40"/><rect x="7" y="12" width="3" height="2.2" fill="#3a3d40"/><rect x="5" y="13.6" width="7" height="1.6" rx="0.5" fill="#3a3d40"/></svg>
<div class="t" style="left:589.75px;top:440.75px;font-size:14.5px;line-height:14.5px;font-weight:400;color:#2b2f33;">11</div>
<div class="t" style="left:730.50px;top:440.75px;font-size:14.5px;line-height:14.5px;font-weight:400;color:#2b2f33;">10</div>
<div class="chips" style="left:917.90px;top:437.52px;"><span class="chip">ai overviews</span><span class="chip">answers (table)</span><span class="chip">carousel</span></div>
<div class="t" style="left:1228.70px;top:440.75px;font-size:14.5px;line-height:14.5px;font-weight:400;color:#2b2f33;">210</div>
<div class="r" style="left:19.00px;top:487.94px;width:1392.00px;height:1.00px;background:#e4e6e7;"></div>
<div class="t" style="left:30.20px;top:467.87px;font-size:14.5px;line-height:14.5px;font-weight:400;color:#2b2f33;">adipic acid</div>
<svg class="r" style="left:352.30px;top:467.64px" width="21" height="14" viewBox="0 0 21 14"><rect width="21" height="14" fill="#fff"/><rect y="0.00" width="21" height="1.08" fill="#d9434f"/><rect y="2.00" width="21" height="1.08" fill="#d9434f"/><rect y="4.00" width="21" height="1.08" fill="#d9434f"/><rect y="6.00" width="21" height="1.08" fill="#d9434f"/><rect y="8.00" width="21" height="1.08" fill="#d9434f"/><rect y="10.00" width="21" height="1.08" fill="#d9434f"/><rect y="12.00" width="21" height="1.08" fill="#d9434f"/><rect width="9.5" height="7.5" fill="#3c4fa0"/><circle cx="1.30" cy="1.10" r="0.35" fill="#cfd6ff"/><circle cx="3.05" cy="1.10" r="0.35" fill="#cfd6ff"/><circle cx="4.80" cy="1.10" r="0.35" fill="#cfd6ff"/><circle cx="6.55" cy="1.10" r="0.35" fill="#cfd6ff"/><circle cx="8.30" cy="1.10" r="0.35" fill="#cfd6ff"/><circle cx="2.15" cy="2.45" r="0.35" fill="#cfd6ff"/><circle cx="3.90" cy="2.45" r="0.35" fill="#cfd6ff"/><circle cx="5.65" cy="2.45" r="0.35" fill="#cfd6ff"/><circle cx="7.40" cy="2.45" r="0.35" fill="#cfd6ff"/><circle cx="9.15" cy="2.45" r="0.35" fill="#cfd6ff"/><circle cx="1.30" cy="3.80" r="0.35" fill="#cfd6ff"/><circle cx="3.05" cy="3.80" r="0.35" fill="#cfd6ff"/><circle cx="4.80" cy="3.80" r="0.35" fill="#cfd6ff"/><circle cx="6.55" cy="3.80" r="0.35" fill="#cfd6ff"/><circle cx="8.30" cy="3.80" r="0.35" fill="#cfd6ff"/><circle cx="2.15" cy="5.15" r="0.35" fill="#cfd6ff"/><circle cx="3.90" cy="5.15" r="0.35" fill="#cfd6ff"/><circle cx="5.65" cy="5.15" r="0.35" fill="#cfd6ff"/><circle cx="7.40" cy="5.15" r="0.35" fill="#cfd6ff"/><circle cx="9.15" cy="5.15" r="0.35" fill="#cfd6ff"/><circle cx="1.30" cy="6.50" r="0.35" fill="#cfd6ff"/><circle cx="3.05" cy="6.50" r="0.35" fill="#cfd6ff"/><circle cx="4.80" cy="6.50" r="0.35" fill="#cfd6ff"/><circle cx="6.55" cy="6.50" r="0.35" fill="#cfd6ff"/><circle cx="8.30" cy="6.50" r="0.35" fill="#cfd6ff"/></svg>
<div class="t" style="left:377.30px;top:468.12px;font-size:14.2px;line-height:14.2px;font-weight:400;color:#2b2f33;">US-en</div>
<svg class="r" style="left:472.50px;top:467.14px" width="17" height="16" viewBox="0 0 17 16"><path d="M1.5 2.5 Q1.5 1 3 1 H14 Q15.5 1 15.5 2.5 V10.5 Q15.5 12 14 12 H3 Q1.5 12 1.5 10.5 Z" fill="none" stroke="#3a3d40" stroke-width="2"/><rect x="1.5" y="9" width="14" height="3" fill="#3a3d40"/><rect x="7" y="12" width="3" height="2.2" fill="#3a3d40"/><rect x="5" y="13.6" width="7" height="1.6" rx="0.5" fill="#3a3d40"/></svg>
<div class="t" style="left:589.75px;top:467.87px;font-size:14.5px;line-height:14.5px;font-weight:400;color:#2b2f33;">11</div>
<div class="t" style="left:730.50px;top:467.87px;font-size:14.5px;line-height:14.5px;font-weight:400;color:#2b2f33;">9</div>
<div class="chips" style="left:917.90px;top:464.64px;"><span class="chip">ai overviews</span><span class="chip">carousel</span><span class="chip">images</span><span class="chip">people also ask</span></div>
<div class="t" style="left:1228.70px;top:467.87px;font-size:14.5px;line-height:14.5px;font-weight:400;color:#2b2f33;">0</div>
</div>
<div class="t" style="left:1400.30px;top:927.61px;font-size:15.7px;line-height:15.7px;font-weight:400;color:#6a6e72;">Rows:</div>
<div class="t" style="left:1463.60px;top:927.36px;font-size:16px;line-height:16px;font-weight:400;color:#2b2f33;">25</div>
<svg class="r" style="left:1489.00px;top:931.00px" width="13" height="8" viewBox="0 0 13 8"><path d="M1 1 H12 L6.5 6.5 Z" fill="#555"/></svg>
<div class="t" style="left:1545.00px;top:927.02px;font-size:16.4px;line-height:16.4px;font-weight:400;color:#2b2f33;">1–25 of 2268</div>
<svg class="r" style="left:1680.00px;top:927.00px" width="14" height="18" viewBox="0 0 14 18"><polyline points="10,2.9 4.2,9 10,15.1" fill="none" stroke="#6a6a6a" stroke-width="2.2" stroke-linecap="round" stroke-linejoin="round"/></svg>
<svg class="r" style="left:1725.00px;top:927.00px" width="14" height="18" viewBox="0 0 14 18"><polyline points="4,2.9 9.8,9 4,15.1" fill="none" stroke="#6a6a6a" stroke-width="2.2" stroke-linecap="round" stroke-linejoin="round"/></svg>
<div class="r" style="left:1256.00px;top:424.40px;width:128.00px;height:493.60px;border:6px solid #F3C646;box-sizing:border-box;"></div>
<div class="r" style="left:69.00px;top:623.00px;width:1017.00px;height:375.50px;background:#fff;"></div>
<div class="r" style="left:69.00px;top:623.00px;width:4.00px;height:375.50px;background:#dcdcdc;"></div>
<div class="r" style="left:1076.30px;top:623.00px;width:10.70px;height:375.50px;background:linear-gradient(90deg,#d6d6d6,#e6e6e6 60%,#f6f6f6);"></div>
<svg class="r" style="left:1025.05px;top:626.55px" width="16.5" height="16.5" viewBox="0 0 16.5 16.5"><path d="M2 2 L14.5 14.5 M14.5 2 L2 14.5" stroke="#727272" stroke-width="1.9" stroke-linecap="square"/></svg>
<div class="t" style="left:97.80px;top:657.55px;font-size:20.5px;line-height:20.5px;font-weight:700;color:#15191c;">Filters</div>
<div class="r" style="left:97.25px;top:695.20px;width:222.15px;height:46.80px;border:1px solid #cfd3d6;border-radius:11px;box-sizing:border-box;background:#fff;"></div>
<div class="t" style="left:118.90px;top:709.96px;font-size:18px;line-height:18px;font-weight:400;color:#2b2f33;">Base Rank</div>
<svg class="r" style="left:284.20px;top:715.30px" width="13.6" height="7.2" viewBox="0 0 13.6 7.2"><path d="M0 0 H13.6 L6.8 7.2 Z" fill="#555"/></svg>
<div class="r" style="left:332.40px;top:695.20px;width:221.10px;height:46.80px;border:1px solid #cfd3d6;border-radius:11px;box-sizing:border-box;background:#fff;"></div>
<div class="t" style="left:352.50px;top:709.37px;font-size:18.7px;line-height:18.7px;font-weight:400;color:#2b2f33;">is better than</div>
<svg class="r" style="left:519.00px;top:715.30px" width="13.6" height="7.2" viewBox="0 0 13.6 7.2"><path d="M0 0 H13.6 L6.8 7.2 Z" fill="#555"/></svg>
<div class="r" style="left:566.30px;top:695.60px;width:203.80px;height:49.30px;border:1px solid #cfd3d6;border-radius:11px;box-sizing:border-box;background:#fff;"></div>
<div class="t" style="left:587.10px;top:711.76px;font-size:18px;line-height:18px;font-weight:400;color:#2b2f33;">11</div>
<div class="r" style="left:789.60px;top:707.60px;width:44.60px;height:20.60px;background:#9e9e9e;border-radius:10.3px;"></div>
<div class="r" style="left:780px;top:706.2px;width:28.5px;height:28.5px;border-radius:50%;background:#fff;box-shadow:0 1px 2.5px rgba(0,0,0,0.4);"></div>
<div class="t" style="left:853.00px;top:694.26px;font-size:18px;line-height:18px;font-weight:400;color:#2b2f33;">Non-</div>
<div class="t" style="left:853.00px;top:724.06px;font-size:18px;line-height:18px;font-weight:400;color:#2b2f33;">Ranking</div>
<svg class="r" style="left:1016.00px;top:709.90px" width="19" height="19" viewBox="0 0 19 19"><path d="M2 2 L17 17 M17 2 L2 17" stroke="#6a6a6a" stroke-width="2.1" stroke-linecap="square"/></svg>
<div class="t" style="left:97.80px;top:765.50px;font-size:17.6px;line-height:17.6px;font-weight:400;color:#2b2f33;">AND</div>
<div class="r" style="left:97.25px;top:801.70px;width:222.15px;height:45.10px;border:1px solid #cfd3d6;border-radius:11px;box-sizing:border-box;background:#fff;"></div>
<div class="t" style="left:118.90px;top:815.76px;font-size:18px;line-height:18px;font-weight:400;color:#2b2f33;">SERP Features (...</div>
<svg class="r" style="left:284.20px;top:821.00px" width="13.6" height="7.2" viewBox="0 0 13.6 7.2"><path d="M0 0 H13.6 L6.8 7.2 Z" fill="#555"/></svg>
<div class="r" style="left:332.40px;top:801.70px;width:221.10px;height:45.10px;border:1px solid #cfd3d6;border-radius:11px;box-sizing:border-box;background:#fff;"></div>
<div class="t" style="left:352.50px;top:814.92px;font-size:19px;line-height:19px;font-weight:400;color:#2b2f33;">is any of</div>
<svg class="r" style="left:519.00px;top:821.00px" width="13.6" height="7.2" viewBox="0 0 13.6 7.2"><path d="M0 0 H13.6 L6.8 7.2 Z" fill="#555"/></svg>
<div class="r" style="left:566.30px;top:801.90px;width:420.20px;height:48.10px;border:1px solid #cfd3d6;border-radius:11px;box-sizing:border-box;background:#fff;"></div>
<div class="r" style="left:592.20px;top:811.00px;width:161.80px;height:29.80px;background:#137aa0;border-radius:15px;"></div>
<div class="t" style="left:603.30px;top:817.06px;font-size:18.6px;line-height:18.6px;font-weight:400;color:#d2f6ff;">ai overviews</div>
<svg class="r" style="left:722.05px;top:818.15px" width="15.5" height="15.5" viewBox="0 0 15.5 15.5"><path d="M2 2 L13.5 13.5 M13.5 2 L2 13.5" stroke="#d2f6ff" stroke-width="2.1" stroke-linecap="square"/></svg>
<div class="t" style="left:764.60px;top:816.00px;font-size:18.9px;line-height:18.9px;font-weight:400;color:#a9adb1;">Input value</div>
<svg class="r" style="left:948.00px;top:822.50px" width="15.4" height="7.5" viewBox="0 0 15.4 7.5"><path d="M0 0 H15.4 L7.7 7.5 Z" fill="#555"/></svg>
<svg class="r" style="left:1016.00px;top:817.30px" width="19" height="19" viewBox="0 0 19 19"><path d="M2 2 L17 17 M17 2 L2 17" stroke="#6a6a6a" stroke-width="2.1" stroke-linecap="square"/></svg>
<svg class="r" style="left:572.00px;top:879.70px" width="30" height="30" viewBox="0 0 30 30"><circle cx="15" cy="15" r="13.4" fill="none" stroke="#1e6882" stroke-width="2.7"/><circle cx="15" cy="15" r="7.2" fill="#1b76a0"/></svg>
<div class="t" style="left:618.60px;top:885.96px;font-size:18px;line-height:18px;font-weight:400;color:#2b2f33;">All</div>
<svg class="r" style="left:663.30px;top:879.70px" width="30" height="30" viewBox="0 0 30 30"><circle cx="15" cy="15" r="13.4" fill="none" stroke="#1e6882" stroke-width="2.7"/></svg>
<div class="t" style="left:710.30px;top:885.62px;font-size:18.4px;line-height:18.4px;font-weight:400;color:#2b2f33;">Owned</div>
<svg class="r" style="left:793.60px;top:879.70px" width="30" height="30" viewBox="0 0 30 30"><circle cx="15" cy="15" r="13.4" fill="none" stroke="#1e6882" stroke-width="2.7"/></svg>
<div class="t" style="left:840.20px;top:886.00px;font-size:18.9px;line-height:18.9px;font-weight:400;color:#2b2f33;">Unowned</div>
<div class="r" style="left:97.25px;top:949.80px;width:98.95px;height:46.90px;background:#455a64;border-radius:9px;"></div>
<svg class="r" style="left:107.00px;top:963.00px" width="22" height="22" viewBox="0 0 22 22"><path d="M11 2 V20 M2 11 H20" stroke="#fff" stroke-width="2.2"/></svg>
<div class="t" style="left:145.40px;top:965.06px;font-size:18px;line-height:18px;font-weight:700;color:#ffffff;">AND</div>
<div class="t" style="left:967.60px;top:965.26px;font-size:18.6px;line-height:18.6px;font-weight:700;color:#44484c;">Clear all</div>
</body></html>
